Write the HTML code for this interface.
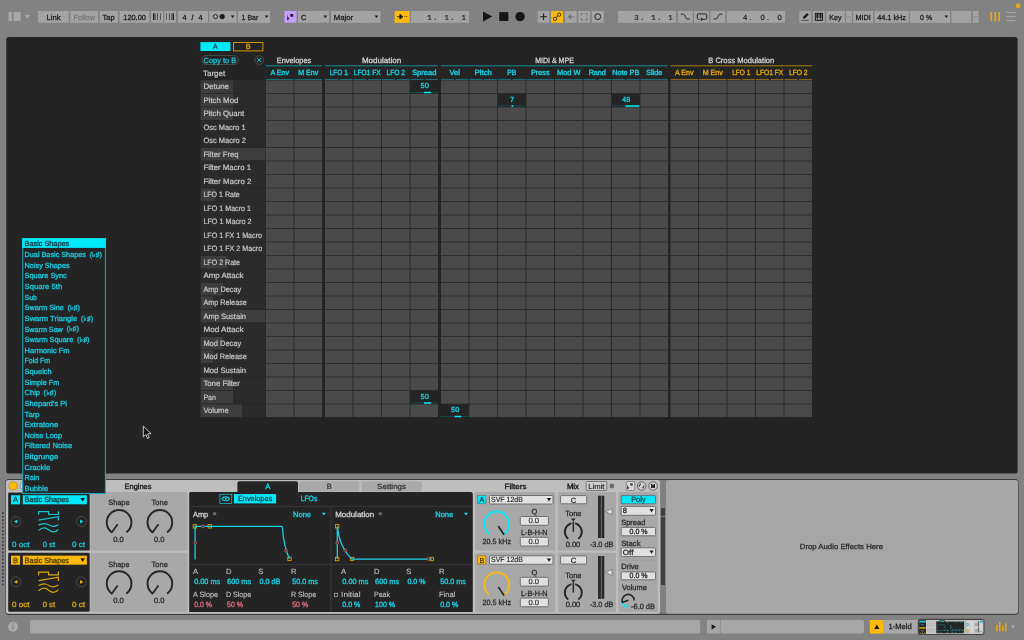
<!DOCTYPE html>
<html lang="en">
<head>
<meta charset="utf-8">
<title>Meld - Modulation Matrix</title>
<style>
html,body{margin:0;padding:0;background:#828282;overflow:hidden}
svg{display:block}
svg{will-change:transform}
text{font-family:"Liberation Sans", sans-serif;white-space:pre;text-rendering:geometricPrecision}
</style>
</head>
<body>
<svg width="1024" height="640" viewBox="0 0 1024 640">
<g id="control-bar">
<rect x="0" y="0" width="1024" height="640" fill="#828282"/>
<rect x="8.5" y="12" width="3.4" height="9" fill="#a8a8a8"/>
<rect x="13.5" y="12" width="7.1" height="9" fill="#a8a8a8"/>
<path d="M25 15.1 h4.8 l-2.4 3.6 z" fill="#a8a8a8"/>
<rect x="38.1" y="11" width="30.65" height="11.8" fill="#a3a3a3"/>
<text x="53.6" y="19.52" font-size="7.45" fill="#1c1c1c" text-anchor="middle" stroke="#1c1c1c" stroke-width="0.28" textLength="14.2" lengthAdjust="spacingAndGlyphs">Link</text>
<rect x="70.25" y="11" width="27.85" height="11.8" fill="#a3a3a3"/>
<text x="84.3" y="19.52" font-size="7.45" fill="#777" text-anchor="middle" stroke="#777" stroke-width="0.28" textLength="21.5" lengthAdjust="spacingAndGlyphs">Follow</text>
<rect x="99.6" y="11" width="18.3" height="11.8" fill="#a3a3a3"/>
<text x="108.6" y="19.52" font-size="7.45" fill="#1c1c1c" text-anchor="middle" stroke="#1c1c1c" stroke-width="0.28" textLength="12" lengthAdjust="spacingAndGlyphs">Tap</text>
<rect x="119.6" y="11" width="29.65" height="11.8" fill="#a3a3a3"/>
<text x="134.6" y="19.52" font-size="7.45" fill="#1c1c1c" text-anchor="middle" stroke="#1c1c1c" stroke-width="0.28" textLength="22.6" lengthAdjust="spacingAndGlyphs">120.00</text>
<rect x="151" y="11" width="12" height="11.8" fill="#a3a3a3"/>
<rect x="153" y="13.3" width="1" height="6.7" fill="#1c1c1c" opacity="0.95"/>
<rect x="154" y="13.3" width="1" height="6.7" fill="#1c1c1c" opacity="0.5"/>
<rect x="155" y="13.3" width="1" height="6.7" fill="#1c1c1c" opacity="0.38"/>
<rect x="157" y="13.3" width="1" height="6.7" fill="#1c1c1c" opacity="0.6"/>
<rect x="160" y="13.3" width="1" height="6.7" fill="#1c1c1c" opacity="0.55"/>
<rect x="164.25" y="11" width="11.85" height="11.8" fill="#a3a3a3"/>
<rect x="166" y="13.3" width="1" height="6.7" fill="#1c1c1c" opacity="0.5"/>
<rect x="169" y="13.3" width="1" height="6.7" fill="#1c1c1c" opacity="0.6"/>
<rect x="171" y="13.3" width="1" height="6.7" fill="#1c1c1c" opacity="0.42"/>
<rect x="172" y="13.3" width="1" height="6.7" fill="#1c1c1c" opacity="0.5"/>
<rect x="173" y="13.3" width="1" height="6.7" fill="#1c1c1c" opacity="0.95"/>
<rect x="178" y="11" width="30" height="11.8" fill="#a3a3a3"/>
<text x="182.6" y="19.52" font-size="7.45" fill="#1c1c1c" stroke="#1c1c1c" stroke-width="0.28" textLength="20" lengthAdjust="spacing">4 / 4</text>
<rect x="209.25" y="11" width="27.35" height="11.8" fill="#a3a3a3"/>
<circle cx="215.5" cy="16.6" r="2.1" fill="none" stroke="#1c1c1c" stroke-width="0.9"/>
<circle cx="222.2" cy="16.6" r="2.6" fill="#1c1c1c"/>
<path d="M230.7 15.4 h3.8 l-1.9 2.6 z" fill="#1c1c1c"/>
<rect x="238" y="11" width="32" height="11.8" fill="#a3a3a3"/>
<text x="241.6" y="19.52" font-size="7.45" fill="#1c1c1c" stroke="#1c1c1c" stroke-width="0.28" textLength="16.6" lengthAdjust="spacingAndGlyphs">1 Bar</text>
<path d="M264.6 15.4 h3.8 l-1.9 2.6 z" fill="#1c1c1c"/>
<rect x="284.4" y="11" width="12.1" height="11.8" fill="#c39ffb"/>
<text x="286.8" y="20.08" font-size="5.8" fill="#2a1a3a" stroke="#2a1a3a" stroke-width="0.45" style='font-family:"DejaVu Sans", sans-serif'>♭</text>
<rect x="290.3" y="13.9" width="3" height="2.9" fill="#2a1a3a" rx="0.6"/>
<rect x="298" y="11" width="31" height="11.8" fill="#a3a3a3"/>
<text x="301" y="19.52" font-size="7.45" fill="#1c1c1c" stroke="#1c1c1c" stroke-width="0.28">C</text>
<path d="M323.4 15.4 h3.8 l-1.9 2.6 z" fill="#1c1c1c"/>
<rect x="330.9" y="11" width="49.7" height="11.8" fill="#a3a3a3"/>
<text x="333.8" y="19.52" font-size="7.45" fill="#1c1c1c" stroke="#1c1c1c" stroke-width="0.28" textLength="19.4" lengthAdjust="spacingAndGlyphs">Major</text>
<path d="M374.6 15.4 h3.8 l-1.9 2.6 z" fill="#1c1c1c"/>
<rect x="394.6" y="11" width="15" height="11.8" fill="#fdb90c"/>
<path d="M397 16.7 h5.2 M399.9 14.4 l3 2.3 l-3 2.3 z" fill="#1c1c1c" stroke="#1c1c1c" stroke-width="0.9"/>
<rect x="404.4" y="16.3" width="1" height="0.8" fill="#1c1c1c"/>
<rect x="406.3" y="16.3" width="1" height="0.8" fill="#1c1c1c"/>
<rect x="410.9" y="11" width="58.2" height="11.8" fill="#a3a3a3"/>
<text x="427.3" y="19.57" font-size="7.6" fill="#1c1c1c" stroke="#1c1c1c" stroke-width="0.15" style='font-family:"Liberation Mono", monospace;letter-spacing:1.14px'>1. 1. 1</text>
<path d="M483 11.6 L492.3 16.6 L483 21.6 z" fill="#161616"/>
<rect x="499.2" y="12.1" width="9.1" height="8.9" fill="#161616"/>
<circle cx="520.1" cy="16.6" r="4.7" fill="#161616"/>
<rect x="537.6" y="11" width="11.9" height="11.8" fill="#a3a3a3"/>
<path d="M540.3 16.7 h6.6 M543.6 13.4 v6.6" fill="none" stroke="#1c1c1c" stroke-width="1"/>
<rect x="551.1" y="11" width="11.9" height="11.8" fill="#fdb90c"/>
<path d="M556.2 17.6 L558 15.8" fill="none" stroke="#1c1c1c" stroke-width="0.9"/>
<circle cx="555" cy="18.8" r="1.7" fill="none" stroke="#1c1c1c" stroke-width="0.8"/>
<circle cx="559.2" cy="14.6" r="1.7" fill="none" stroke="#1c1c1c" stroke-width="0.8"/>
<rect x="564.75" y="11" width="12" height="11.8" fill="#a3a3a3"/>
<path d="M574 16.7 h-5 M570.9 14.7 l-2.9 2 l2.9 2 z" fill="#747474" stroke="#747474" stroke-width="0.8"/>
<rect x="578.25" y="11" width="11.85" height="11.8" fill="#a3a3a3"/>
<path d="M581.3 15.4 v-1.9 h1.9 M585.2 13.5 h1.9 v1.9 M587.1 18 v1.9 h-1.9 M583.2 19.9 h-1.9 v-1.9" fill="none" stroke="#747474" stroke-width="0.9"/>
<rect x="591.75" y="11" width="12.15" height="11.8" fill="#a3a3a3"/>
<circle cx="597.8" cy="16.7" r="2.9" fill="none" stroke="#1c1c1c" stroke-width="0.9"/>
<rect x="618" y="11" width="58.1" height="11.8" fill="#a3a3a3"/>
<text x="634.2" y="19.57" font-size="7.6" fill="#1c1c1c" stroke="#1c1c1c" stroke-width="0.15" style='font-family:"Liberation Mono", monospace;letter-spacing:1.14px'>3. 1. 1</text>
<rect x="677.75" y="11" width="15" height="11.8" fill="#a3a3a3"/>
<path d="M680.8 14.2 h2.6 c2.2 0 1.6 4.8 4 4.8 h2.4" fill="none" stroke="#1c1c1c" stroke-width="0.9"/>
<rect x="694" y="11" width="15" height="11.8" fill="#a3a3a3"/>
<path d="M702.8 19.3 h3 a0.9 0.9 0 0 0 0.9 -0.9 v-3.6 a0.9 0.9 0 0 0 -0.9 -0.9 h-7.6 a0.9 0.9 0 0 0 -0.9 0.9 v3.6 a0.9 0.9 0 0 0 0.9 0.9 h1.6" fill="none" stroke="#1c1c1c" stroke-width="0.9"/>
<path d="M703.2 19.3 l-2.3 -1.7 v3.4 z" fill="#1c1c1c"/>
<rect x="710.5" y="11" width="14.75" height="11.8" fill="#a3a3a3"/>
<path d="M713.4 19 h2.6 c2.2 0 1.6 -4.8 4 -4.8 h2.4" fill="none" stroke="#1c1c1c" stroke-width="0.9"/>
<rect x="726.9" y="11" width="58.1" height="11.8" fill="#a3a3a3"/>
<text x="742.9" y="19.57" font-size="7.6" fill="#1c1c1c" stroke="#1c1c1c" stroke-width="0.2" dx="0 2.37 0.4 6.3 2.27 1 5.2">4. 0. 0</text>
<rect x="799.25" y="11" width="11.85" height="11.8" fill="#a3a3a3"/>
<line x1="803.5" y1="18.1" x2="808" y2="13.9" stroke="#1c1c1c" stroke-width="2.4"/>
<rect x="801.4" y="19.9" width="7.4" height="0.8" fill="#3a3a3a"/>
<rect x="812.75" y="11" width="12.05" height="11.8" fill="#a3a3a3"/>
<rect x="815.4" y="13.4" width="7.1" height="7" fill="none" stroke="#1c1c1c" stroke-width="1"/>
<rect x="816.4" y="13.4" width="2" height="4.8" fill="#1c1c1c"/>
<rect x="819.5" y="13.4" width="2" height="4.8" fill="#1c1c1c"/>
<line x1="817.35" y1="18.2" x2="817.35" y2="20.4" stroke="#1c1c1c" stroke-width="0.6"/>
<line x1="820.55" y1="18.2" x2="820.55" y2="20.4" stroke="#1c1c1c" stroke-width="0.6"/>
<rect x="826.25" y="11" width="18.5" height="11.8" fill="#a3a3a3"/>
<text x="835.4" y="19.52" font-size="7.45" fill="#1c1c1c" text-anchor="middle" stroke="#1c1c1c" stroke-width="0.28" textLength="12.3" lengthAdjust="spacingAndGlyphs">Key</text>
<rect x="846" y="11" width="5.9" height="11.8" fill="#a3a3a3"/>
<line x1="846" y1="16.9" x2="851.9" y2="16.9" stroke="#828282" stroke-width="0.6"/>
<rect x="853.1" y="11" width="20" height="11.8" fill="#a3a3a3"/>
<text x="863.2" y="19.52" font-size="7.45" fill="#1c1c1c" text-anchor="middle" stroke="#1c1c1c" stroke-width="0.28" textLength="15.4" lengthAdjust="spacingAndGlyphs">MIDI</text>
<rect x="874.6" y="11" width="34.15" height="11.8" fill="#a3a3a3"/>
<text x="891.6" y="19.52" font-size="7.45" fill="#1c1c1c" text-anchor="middle" stroke="#1c1c1c" stroke-width="0.28" textLength="28.8" lengthAdjust="spacingAndGlyphs">44.1 kHz</text>
<rect x="910.1" y="11" width="39.9" height="11.8" fill="#a3a3a3"/>
<text x="926.1" y="19.52" font-size="7.45" fill="#1c1c1c" text-anchor="middle" stroke="#1c1c1c" stroke-width="0.28" textLength="12" lengthAdjust="spacingAndGlyphs">0 %</text>
<path d="M944.4 15.4 h3.8 l-1.9 2.6 z" fill="#1c1c1c"/>
<rect x="951.4" y="11" width="19.85" height="11.8" fill="#a3a3a3"/>
<rect x="972.9" y="11" width="5.6" height="11.8" fill="#a3a3a3"/>
<line x1="972.9" y1="16.9" x2="978.5" y2="16.9" stroke="#828282" stroke-width="0.6"/>
<rect x="990.4" y="12.1" width="1.7" height="9.2" fill="#e6a913"/>
<rect x="994.4" y="12.1" width="1.7" height="9.2" fill="#e6a913"/>
<rect x="998.3" y="12.1" width="1.7" height="9.2" fill="#e6a913"/>
<rect x="1006.3" y="11.9" width="9.3" height="1.2" fill="#a6a6a6"/>
<rect x="1006.3" y="15.9" width="9.3" height="1.2" fill="#a6a6a6"/>
<rect x="1006.3" y="19.9" width="9.3" height="1.2" fill="#a6a6a6"/>
<circle cx="1018.1" cy="5.8" r="2.4" fill="#e6a913"/>
</g>
<g id="matrix-view">
<rect x="6.3" y="37.1" width="1011.3" height="436.4" fill="#242424" rx="2.2"/>
<rect x="200.4" y="42.1" width="30" height="8.9" fill="#03e9fc"/>
<text x="215.3" y="49.35" font-size="7.4" fill="#1c3f45" text-anchor="middle" stroke="#1c3f45" stroke-width="0.28">A</text>
<rect x="233.5" y="42.5" width="29.4" height="8.4" fill="none" stroke="#e0a20e" stroke-width="0.9"/>
<text x="248.2" y="49.35" font-size="7.4" fill="#e0a20e" text-anchor="middle" stroke="#e0a20e" stroke-width="0.28">B</text>
<rect x="201.7" y="55.5" width="36.6" height="9" fill="none" rx="4.5" stroke="#5c5c5c" stroke-width="0.7"/>
<text x="203.6" y="62.82" font-size="7.6" fill="#18bfd1" stroke="#18bfd1" stroke-width="0.36" textLength="32.6" lengthAdjust="spacingAndGlyphs">Copy to B</text>
<circle cx="259.2" cy="60" r="4.3" fill="none" stroke="#5c5c5c" stroke-width="0.7"/>
<path d="M257.2 58 l4 4 M261.2 58 l-4 4" fill="none" stroke="#19cfe3" stroke-width="1"/>
<text x="203.1" y="76.17" font-size="7.75" fill="#c5c5c5" stroke="#c5c5c5" stroke-width="0.23" textLength="22" lengthAdjust="spacingAndGlyphs">Target</text>
<text x="279.75" y="75.44" font-size="7.5" fill="#19cfe3" text-anchor="middle" stroke="#19cfe3" stroke-width="0.38" textLength="18.6" lengthAdjust="spacingAndGlyphs">A Env</text>
<rect x="266" y="78.9" width="27.5" height="1.1" fill="#1a6c76"/>
<text x="308.25" y="75.44" font-size="7.5" fill="#19cfe3" text-anchor="middle" stroke="#19cfe3" stroke-width="0.38" textLength="20.2" lengthAdjust="spacingAndGlyphs">M Env</text>
<rect x="294.5" y="78.9" width="27.5" height="1.1" fill="#1a6c76"/>
<rect x="266" y="65.3" width="56" height="1" fill="#148c98"/>
<text x="294" y="62.87" font-size="7.75" fill="#d4d4d4" text-anchor="middle" stroke="#d4d4d4" stroke-width="0.28" textLength="34.4" lengthAdjust="spacingAndGlyphs">Envelopes</text>
<text x="338.75" y="75.44" font-size="7.5" fill="#19cfe3" text-anchor="middle" stroke="#19cfe3" stroke-width="0.38" textLength="18.2" lengthAdjust="spacingAndGlyphs">LFO 1</text>
<rect x="325" y="78.9" width="12.9" height="1.1" fill="#1a6c76"/>
<rect x="339.6" y="78.9" width="12.9" height="1.1" fill="#1a6c76"/>
<text x="367.25" y="75.44" font-size="7.5" fill="#19cfe3" text-anchor="middle" stroke="#19cfe3" stroke-width="0.38" textLength="27" lengthAdjust="spacingAndGlyphs">LFO1 FX</text>
<rect x="353.5" y="78.9" width="12.9" height="1.1" fill="#1a6c76"/>
<rect x="368.1" y="78.9" width="12.9" height="1.1" fill="#1a6c76"/>
<text x="395.75" y="75.44" font-size="7.5" fill="#19cfe3" text-anchor="middle" stroke="#19cfe3" stroke-width="0.38" textLength="18.6" lengthAdjust="spacingAndGlyphs">LFO 2</text>
<rect x="382" y="78.9" width="12.9" height="1.1" fill="#1a6c76"/>
<rect x="396.6" y="78.9" width="12.9" height="1.1" fill="#1a6c76"/>
<text x="424.25" y="75.44" font-size="7.5" fill="#19cfe3" text-anchor="middle" stroke="#19cfe3" stroke-width="0.38" textLength="24.6" lengthAdjust="spacingAndGlyphs">Spread</text>
<rect x="410.5" y="78.9" width="12.9" height="1.1" fill="#1a6c76"/>
<rect x="425.1" y="78.9" width="12.9" height="1.1" fill="#1a6c76"/>
<rect x="325" y="65.3" width="113" height="1" fill="#148c98"/>
<text x="381.5" y="62.87" font-size="7.75" fill="#d4d4d4" text-anchor="middle" stroke="#d4d4d4" stroke-width="0.28" textLength="39.2" lengthAdjust="spacingAndGlyphs">Modulation</text>
<text x="454.75" y="75.44" font-size="7.5" fill="#19cfe3" text-anchor="middle" stroke="#19cfe3" stroke-width="0.38" textLength="10.4" lengthAdjust="spacingAndGlyphs">Vel</text>
<rect x="441" y="78.9" width="12.9" height="1.1" fill="#1a6c76"/>
<rect x="455.6" y="78.9" width="12.9" height="1.1" fill="#1a6c76"/>
<text x="483.25" y="75.44" font-size="7.5" fill="#19cfe3" text-anchor="middle" stroke="#19cfe3" stroke-width="0.38" textLength="17.6" lengthAdjust="spacingAndGlyphs">Pitch</text>
<rect x="469.5" y="78.9" width="12.9" height="1.1" fill="#1a6c76"/>
<rect x="484.1" y="78.9" width="12.9" height="1.1" fill="#1a6c76"/>
<text x="511.75" y="75.44" font-size="7.5" fill="#19cfe3" text-anchor="middle" stroke="#19cfe3" stroke-width="0.38" textLength="9" lengthAdjust="spacingAndGlyphs">PB</text>
<rect x="498" y="78.9" width="12.9" height="1.1" fill="#1a6c76"/>
<rect x="512.6" y="78.9" width="12.9" height="1.1" fill="#1a6c76"/>
<text x="540.25" y="75.44" font-size="7.5" fill="#19cfe3" text-anchor="middle" stroke="#19cfe3" stroke-width="0.38" textLength="18.6" lengthAdjust="spacingAndGlyphs">Press</text>
<rect x="526.5" y="78.9" width="27.5" height="1.1" fill="#1a6c76"/>
<text x="568.75" y="75.44" font-size="7.5" fill="#19cfe3" text-anchor="middle" stroke="#19cfe3" stroke-width="0.38" textLength="23.6" lengthAdjust="spacingAndGlyphs">Mod W</text>
<rect x="555" y="78.9" width="27.5" height="1.1" fill="#1a6c76"/>
<text x="597.25" y="75.44" font-size="7.5" fill="#19cfe3" text-anchor="middle" stroke="#19cfe3" stroke-width="0.38" textLength="17.2" lengthAdjust="spacingAndGlyphs">Rand</text>
<rect x="583.5" y="78.9" width="12.9" height="1.1" fill="#1a6c76"/>
<rect x="598.1" y="78.9" width="12.9" height="1.1" fill="#1a6c76"/>
<text x="625.75" y="75.44" font-size="7.5" fill="#19cfe3" text-anchor="middle" stroke="#19cfe3" stroke-width="0.38" textLength="27" lengthAdjust="spacingAndGlyphs">Note PB</text>
<rect x="612" y="78.9" width="12.9" height="1.1" fill="#1a6c76"/>
<rect x="626.6" y="78.9" width="12.9" height="1.1" fill="#1a6c76"/>
<text x="654.25" y="75.44" font-size="7.5" fill="#19cfe3" text-anchor="middle" stroke="#19cfe3" stroke-width="0.38" textLength="16.4" lengthAdjust="spacingAndGlyphs">Slide</text>
<rect x="640.5" y="78.9" width="27.5" height="1.1" fill="#1a6c76"/>
<rect x="441" y="65.3" width="227" height="1" fill="#148c98"/>
<text x="554.5" y="62.87" font-size="7.75" fill="#d4d4d4" text-anchor="middle" stroke="#d4d4d4" stroke-width="0.28" textLength="38.7" lengthAdjust="spacingAndGlyphs">MIDI &amp; MPE</text>
<text x="684.25" y="75.44" font-size="7.5" fill="#e2a60c" text-anchor="middle" stroke="#e2a60c" stroke-width="0.38" textLength="18.6" lengthAdjust="spacingAndGlyphs">A Env</text>
<rect x="670.5" y="78.9" width="27.5" height="1.1" fill="#85651a"/>
<text x="712.75" y="75.44" font-size="7.5" fill="#e2a60c" text-anchor="middle" stroke="#e2a60c" stroke-width="0.38" textLength="20.2" lengthAdjust="spacingAndGlyphs">M Env</text>
<rect x="699" y="78.9" width="27.5" height="1.1" fill="#85651a"/>
<text x="741.25" y="75.44" font-size="7.5" fill="#e2a60c" text-anchor="middle" stroke="#e2a60c" stroke-width="0.38" textLength="18.2" lengthAdjust="spacingAndGlyphs">LFO 1</text>
<rect x="727.5" y="78.9" width="12.9" height="1.1" fill="#85651a"/>
<rect x="742.1" y="78.9" width="12.9" height="1.1" fill="#85651a"/>
<text x="769.75" y="75.44" font-size="7.5" fill="#e2a60c" text-anchor="middle" stroke="#e2a60c" stroke-width="0.38" textLength="27" lengthAdjust="spacingAndGlyphs">LFO1 FX</text>
<rect x="756" y="78.9" width="12.9" height="1.1" fill="#85651a"/>
<rect x="770.6" y="78.9" width="12.9" height="1.1" fill="#85651a"/>
<text x="798.25" y="75.44" font-size="7.5" fill="#e2a60c" text-anchor="middle" stroke="#e2a60c" stroke-width="0.38" textLength="18.6" lengthAdjust="spacingAndGlyphs">LFO 2</text>
<rect x="784.5" y="78.9" width="12.9" height="1.1" fill="#85651a"/>
<rect x="799.1" y="78.9" width="12.9" height="1.1" fill="#85651a"/>
<rect x="670.5" y="65.3" width="141.5" height="1" fill="#a87e0e"/>
<text x="741.25" y="62.87" font-size="7.75" fill="#d4d4d4" text-anchor="middle" stroke="#d4d4d4" stroke-width="0.28" textLength="66" lengthAdjust="spacingAndGlyphs">B Cross Modulation</text>
<rect x="200.7" y="79.9" width="64.8" height="337.5" fill="#2b2b2b"/>
<rect x="266" y="80.4" width="56" height="336.7" fill="#2b2b2b"/>
<rect x="325" y="80.4" width="113" height="336.7" fill="#2b2b2b"/>
<rect x="441" y="80.4" width="227" height="336.7" fill="#2b2b2b"/>
<rect x="670.5" y="80.4" width="141.5" height="336.7" fill="#2b2b2b"/>
<rect x="200.7" y="80.4" width="32.3" height="12.7" fill="#3d3d3d"/>
<text x="203.4" y="89.37" font-size="7.75" fill="#c5c5c5" stroke="#c5c5c5" stroke-width="0.23" textLength="25.6" lengthAdjust="spacingAndGlyphs">Detune</text>
<rect x="266" y="80.4" width="27.5" height="12.7" fill="#4a4a4a"/>
<rect x="294.5" y="80.4" width="27.5" height="12.7" fill="#4a4a4a"/>
<rect x="325" y="80.4" width="27.5" height="12.7" fill="#4a4a4a"/>
<rect x="353.5" y="80.4" width="27.5" height="12.7" fill="#4a4a4a"/>
<rect x="382" y="80.4" width="27.5" height="12.7" fill="#4a4a4a"/>
<rect x="410.5" y="80.4" width="27.5" height="13.2" fill="#242424"/>
<rect x="410.5" y="92" width="27.5" height="0.7" fill="#0f5761"/>
<rect x="423.95" y="91.7" width="7" height="1.5" fill="#03e9fc" rx="0.5"/>
<text x="424.65" y="88.45" font-size="7.4" fill="#19cfe3" text-anchor="middle" stroke="#19cfe3" stroke-width="0.32">50</text>
<rect x="441" y="80.4" width="27.5" height="12.7" fill="#4a4a4a"/>
<rect x="469.5" y="80.4" width="27.5" height="12.7" fill="#4a4a4a"/>
<rect x="498" y="80.4" width="27.5" height="12.7" fill="#4a4a4a"/>
<rect x="526.5" y="80.4" width="27.5" height="12.7" fill="#4a4a4a"/>
<rect x="555" y="80.4" width="27.5" height="12.7" fill="#4a4a4a"/>
<rect x="583.5" y="80.4" width="27.5" height="12.7" fill="#4a4a4a"/>
<rect x="612" y="80.4" width="27.5" height="12.7" fill="#4a4a4a"/>
<rect x="640.5" y="80.4" width="27.5" height="12.7" fill="#4a4a4a"/>
<rect x="670.5" y="80.4" width="27.5" height="12.7" fill="#4a4a4a"/>
<rect x="699" y="80.4" width="27.5" height="12.7" fill="#4a4a4a"/>
<rect x="727.5" y="80.4" width="27.5" height="12.7" fill="#4a4a4a"/>
<rect x="756" y="80.4" width="27.5" height="12.7" fill="#4a4a4a"/>
<rect x="784.5" y="80.4" width="27.5" height="12.7" fill="#4a4a4a"/>
<rect x="200.7" y="93.15" width="64.8" height="0.5" fill="#262626"/>
<rect x="200.7" y="93.9" width="32.3" height="12.7" fill="#3d3d3d"/>
<text x="203.4" y="102.87" font-size="7.75" fill="#c5c5c5" stroke="#c5c5c5" stroke-width="0.23" textLength="35" lengthAdjust="spacingAndGlyphs">Pitch Mod</text>
<rect x="266" y="93.9" width="27.5" height="12.7" fill="#4a4a4a"/>
<rect x="294.5" y="93.9" width="27.5" height="12.7" fill="#4a4a4a"/>
<rect x="325" y="93.9" width="27.5" height="12.7" fill="#4a4a4a"/>
<rect x="353.5" y="93.9" width="27.5" height="12.7" fill="#4a4a4a"/>
<rect x="382" y="93.9" width="27.5" height="12.7" fill="#4a4a4a"/>
<rect x="410.5" y="93.9" width="27.5" height="12.7" fill="#4a4a4a"/>
<rect x="441" y="93.9" width="27.5" height="12.7" fill="#4a4a4a"/>
<rect x="469.5" y="93.9" width="27.5" height="12.7" fill="#4a4a4a"/>
<rect x="498" y="93.9" width="27.5" height="13.2" fill="#242424"/>
<rect x="498" y="105.5" width="27.5" height="0.7" fill="#0f5761"/>
<rect x="511.45" y="105.2" width="2" height="1.5" fill="#03e9fc" rx="0.5"/>
<text x="512.15" y="101.95" font-size="7.4" fill="#19cfe3" text-anchor="middle" stroke="#19cfe3" stroke-width="0.32">7</text>
<rect x="526.5" y="93.9" width="27.5" height="12.7" fill="#4a4a4a"/>
<rect x="555" y="93.9" width="27.5" height="12.7" fill="#4a4a4a"/>
<rect x="583.5" y="93.9" width="27.5" height="12.7" fill="#4a4a4a"/>
<rect x="612" y="93.9" width="27.5" height="13.2" fill="#242424"/>
<rect x="612" y="105.5" width="27.5" height="0.7" fill="#0f5761"/>
<rect x="625.45" y="105.2" width="14" height="1.5" fill="#03e9fc" rx="0.5"/>
<text x="626.15" y="101.95" font-size="7.4" fill="#19cfe3" text-anchor="middle" stroke="#19cfe3" stroke-width="0.32">48</text>
<rect x="640.5" y="93.9" width="27.5" height="12.7" fill="#4a4a4a"/>
<rect x="670.5" y="93.9" width="27.5" height="12.7" fill="#4a4a4a"/>
<rect x="699" y="93.9" width="27.5" height="12.7" fill="#4a4a4a"/>
<rect x="727.5" y="93.9" width="27.5" height="12.7" fill="#4a4a4a"/>
<rect x="756" y="93.9" width="27.5" height="12.7" fill="#4a4a4a"/>
<rect x="784.5" y="93.9" width="27.5" height="12.7" fill="#4a4a4a"/>
<rect x="200.7" y="106.65" width="64.8" height="0.5" fill="#262626"/>
<rect x="200.7" y="107.4" width="32.3" height="12.7" fill="#3d3d3d"/>
<text x="203.4" y="116.37" font-size="7.75" fill="#c5c5c5" stroke="#c5c5c5" stroke-width="0.23" textLength="40.8" lengthAdjust="spacingAndGlyphs">Pitch Quant</text>
<rect x="266" y="107.4" width="27.5" height="12.7" fill="#4a4a4a"/>
<rect x="294.5" y="107.4" width="27.5" height="12.7" fill="#4a4a4a"/>
<rect x="325" y="107.4" width="27.5" height="12.7" fill="#4a4a4a"/>
<rect x="353.5" y="107.4" width="27.5" height="12.7" fill="#4a4a4a"/>
<rect x="382" y="107.4" width="27.5" height="12.7" fill="#4a4a4a"/>
<rect x="410.5" y="107.4" width="27.5" height="12.7" fill="#4a4a4a"/>
<rect x="441" y="107.4" width="27.5" height="12.7" fill="#4a4a4a"/>
<rect x="469.5" y="107.4" width="27.5" height="12.7" fill="#4a4a4a"/>
<rect x="498" y="107.4" width="27.5" height="12.7" fill="#4a4a4a"/>
<rect x="526.5" y="107.4" width="27.5" height="12.7" fill="#4a4a4a"/>
<rect x="555" y="107.4" width="27.5" height="12.7" fill="#4a4a4a"/>
<rect x="583.5" y="107.4" width="27.5" height="12.7" fill="#4a4a4a"/>
<rect x="612" y="107.4" width="27.5" height="12.7" fill="#4a4a4a"/>
<rect x="640.5" y="107.4" width="27.5" height="12.7" fill="#4a4a4a"/>
<rect x="670.5" y="107.4" width="27.5" height="12.7" fill="#4a4a4a"/>
<rect x="699" y="107.4" width="27.5" height="12.7" fill="#4a4a4a"/>
<rect x="727.5" y="107.4" width="27.5" height="12.7" fill="#4a4a4a"/>
<rect x="756" y="107.4" width="27.5" height="12.7" fill="#4a4a4a"/>
<rect x="784.5" y="107.4" width="27.5" height="12.7" fill="#4a4a4a"/>
<rect x="200.7" y="120.15" width="64.8" height="0.5" fill="#262626"/>
<text x="203.4" y="129.87" font-size="7.75" fill="#c5c5c5" stroke="#c5c5c5" stroke-width="0.23" textLength="42.2" lengthAdjust="spacingAndGlyphs">Osc Macro 1</text>
<rect x="266" y="120.9" width="27.5" height="12.7" fill="#4a4a4a"/>
<rect x="294.5" y="120.9" width="27.5" height="12.7" fill="#4a4a4a"/>
<rect x="325" y="120.9" width="27.5" height="12.7" fill="#4a4a4a"/>
<rect x="353.5" y="120.9" width="27.5" height="12.7" fill="#4a4a4a"/>
<rect x="382" y="120.9" width="27.5" height="12.7" fill="#4a4a4a"/>
<rect x="410.5" y="120.9" width="27.5" height="12.7" fill="#4a4a4a"/>
<rect x="441" y="120.9" width="27.5" height="12.7" fill="#4a4a4a"/>
<rect x="469.5" y="120.9" width="27.5" height="12.7" fill="#4a4a4a"/>
<rect x="498" y="120.9" width="27.5" height="12.7" fill="#4a4a4a"/>
<rect x="526.5" y="120.9" width="27.5" height="12.7" fill="#4a4a4a"/>
<rect x="555" y="120.9" width="27.5" height="12.7" fill="#4a4a4a"/>
<rect x="583.5" y="120.9" width="27.5" height="12.7" fill="#4a4a4a"/>
<rect x="612" y="120.9" width="27.5" height="12.7" fill="#4a4a4a"/>
<rect x="640.5" y="120.9" width="27.5" height="12.7" fill="#4a4a4a"/>
<rect x="670.5" y="120.9" width="27.5" height="12.7" fill="#4a4a4a"/>
<rect x="699" y="120.9" width="27.5" height="12.7" fill="#4a4a4a"/>
<rect x="727.5" y="120.9" width="27.5" height="12.7" fill="#4a4a4a"/>
<rect x="756" y="120.9" width="27.5" height="12.7" fill="#4a4a4a"/>
<rect x="784.5" y="120.9" width="27.5" height="12.7" fill="#4a4a4a"/>
<rect x="200.7" y="133.65" width="64.8" height="0.5" fill="#262626"/>
<text x="203.4" y="143.37" font-size="7.75" fill="#c5c5c5" stroke="#c5c5c5" stroke-width="0.23" textLength="42.6" lengthAdjust="spacingAndGlyphs">Osc Macro 2</text>
<rect x="266" y="134.4" width="27.5" height="12.7" fill="#4a4a4a"/>
<rect x="294.5" y="134.4" width="27.5" height="12.7" fill="#4a4a4a"/>
<rect x="325" y="134.4" width="27.5" height="12.7" fill="#4a4a4a"/>
<rect x="353.5" y="134.4" width="27.5" height="12.7" fill="#4a4a4a"/>
<rect x="382" y="134.4" width="27.5" height="12.7" fill="#4a4a4a"/>
<rect x="410.5" y="134.4" width="27.5" height="12.7" fill="#4a4a4a"/>
<rect x="441" y="134.4" width="27.5" height="12.7" fill="#4a4a4a"/>
<rect x="469.5" y="134.4" width="27.5" height="12.7" fill="#4a4a4a"/>
<rect x="498" y="134.4" width="27.5" height="12.7" fill="#4a4a4a"/>
<rect x="526.5" y="134.4" width="27.5" height="12.7" fill="#4a4a4a"/>
<rect x="555" y="134.4" width="27.5" height="12.7" fill="#4a4a4a"/>
<rect x="583.5" y="134.4" width="27.5" height="12.7" fill="#4a4a4a"/>
<rect x="612" y="134.4" width="27.5" height="12.7" fill="#4a4a4a"/>
<rect x="640.5" y="134.4" width="27.5" height="12.7" fill="#4a4a4a"/>
<rect x="670.5" y="134.4" width="27.5" height="12.7" fill="#4a4a4a"/>
<rect x="699" y="134.4" width="27.5" height="12.7" fill="#4a4a4a"/>
<rect x="727.5" y="134.4" width="27.5" height="12.7" fill="#4a4a4a"/>
<rect x="756" y="134.4" width="27.5" height="12.7" fill="#4a4a4a"/>
<rect x="784.5" y="134.4" width="27.5" height="12.7" fill="#4a4a4a"/>
<rect x="200.7" y="147.15" width="64.8" height="0.5" fill="#262626"/>
<rect x="200.7" y="147.9" width="64.8" height="12.7" fill="#3d3d3d"/>
<text x="203.4" y="156.87" font-size="7.75" fill="#c5c5c5" stroke="#c5c5c5" stroke-width="0.23" textLength="35.2" lengthAdjust="spacingAndGlyphs">Filter Freq</text>
<rect x="266" y="147.9" width="27.5" height="12.7" fill="#4a4a4a"/>
<rect x="294.5" y="147.9" width="27.5" height="12.7" fill="#4a4a4a"/>
<rect x="325" y="147.9" width="27.5" height="12.7" fill="#4a4a4a"/>
<rect x="353.5" y="147.9" width="27.5" height="12.7" fill="#4a4a4a"/>
<rect x="382" y="147.9" width="27.5" height="12.7" fill="#4a4a4a"/>
<rect x="410.5" y="147.9" width="27.5" height="12.7" fill="#4a4a4a"/>
<rect x="441" y="147.9" width="27.5" height="12.7" fill="#4a4a4a"/>
<rect x="469.5" y="147.9" width="27.5" height="12.7" fill="#4a4a4a"/>
<rect x="498" y="147.9" width="27.5" height="12.7" fill="#4a4a4a"/>
<rect x="526.5" y="147.9" width="27.5" height="12.7" fill="#4a4a4a"/>
<rect x="555" y="147.9" width="27.5" height="12.7" fill="#4a4a4a"/>
<rect x="583.5" y="147.9" width="27.5" height="12.7" fill="#4a4a4a"/>
<rect x="612" y="147.9" width="27.5" height="12.7" fill="#4a4a4a"/>
<rect x="640.5" y="147.9" width="27.5" height="12.7" fill="#4a4a4a"/>
<rect x="670.5" y="147.9" width="27.5" height="12.7" fill="#4a4a4a"/>
<rect x="699" y="147.9" width="27.5" height="12.7" fill="#4a4a4a"/>
<rect x="727.5" y="147.9" width="27.5" height="12.7" fill="#4a4a4a"/>
<rect x="756" y="147.9" width="27.5" height="12.7" fill="#4a4a4a"/>
<rect x="784.5" y="147.9" width="27.5" height="12.7" fill="#4a4a4a"/>
<rect x="200.7" y="160.65" width="64.8" height="0.5" fill="#262626"/>
<text x="203.4" y="170.37" font-size="7.75" fill="#c5c5c5" stroke="#c5c5c5" stroke-width="0.23" textLength="47.6" lengthAdjust="spacingAndGlyphs">Filter Macro 1</text>
<rect x="266" y="161.4" width="27.5" height="12.7" fill="#4a4a4a"/>
<rect x="294.5" y="161.4" width="27.5" height="12.7" fill="#4a4a4a"/>
<rect x="325" y="161.4" width="27.5" height="12.7" fill="#4a4a4a"/>
<rect x="353.5" y="161.4" width="27.5" height="12.7" fill="#4a4a4a"/>
<rect x="382" y="161.4" width="27.5" height="12.7" fill="#4a4a4a"/>
<rect x="410.5" y="161.4" width="27.5" height="12.7" fill="#4a4a4a"/>
<rect x="441" y="161.4" width="27.5" height="12.7" fill="#4a4a4a"/>
<rect x="469.5" y="161.4" width="27.5" height="12.7" fill="#4a4a4a"/>
<rect x="498" y="161.4" width="27.5" height="12.7" fill="#4a4a4a"/>
<rect x="526.5" y="161.4" width="27.5" height="12.7" fill="#4a4a4a"/>
<rect x="555" y="161.4" width="27.5" height="12.7" fill="#4a4a4a"/>
<rect x="583.5" y="161.4" width="27.5" height="12.7" fill="#4a4a4a"/>
<rect x="612" y="161.4" width="27.5" height="12.7" fill="#4a4a4a"/>
<rect x="640.5" y="161.4" width="27.5" height="12.7" fill="#4a4a4a"/>
<rect x="670.5" y="161.4" width="27.5" height="12.7" fill="#4a4a4a"/>
<rect x="699" y="161.4" width="27.5" height="12.7" fill="#4a4a4a"/>
<rect x="727.5" y="161.4" width="27.5" height="12.7" fill="#4a4a4a"/>
<rect x="756" y="161.4" width="27.5" height="12.7" fill="#4a4a4a"/>
<rect x="784.5" y="161.4" width="27.5" height="12.7" fill="#4a4a4a"/>
<rect x="200.7" y="174.15" width="64.8" height="0.5" fill="#262626"/>
<text x="203.4" y="183.87" font-size="7.75" fill="#c5c5c5" stroke="#c5c5c5" stroke-width="0.23" textLength="48" lengthAdjust="spacingAndGlyphs">Filter Macro 2</text>
<rect x="266" y="174.9" width="27.5" height="12.7" fill="#4a4a4a"/>
<rect x="294.5" y="174.9" width="27.5" height="12.7" fill="#4a4a4a"/>
<rect x="325" y="174.9" width="27.5" height="12.7" fill="#4a4a4a"/>
<rect x="353.5" y="174.9" width="27.5" height="12.7" fill="#4a4a4a"/>
<rect x="382" y="174.9" width="27.5" height="12.7" fill="#4a4a4a"/>
<rect x="410.5" y="174.9" width="27.5" height="12.7" fill="#4a4a4a"/>
<rect x="441" y="174.9" width="27.5" height="12.7" fill="#4a4a4a"/>
<rect x="469.5" y="174.9" width="27.5" height="12.7" fill="#4a4a4a"/>
<rect x="498" y="174.9" width="27.5" height="12.7" fill="#4a4a4a"/>
<rect x="526.5" y="174.9" width="27.5" height="12.7" fill="#4a4a4a"/>
<rect x="555" y="174.9" width="27.5" height="12.7" fill="#4a4a4a"/>
<rect x="583.5" y="174.9" width="27.5" height="12.7" fill="#4a4a4a"/>
<rect x="612" y="174.9" width="27.5" height="12.7" fill="#4a4a4a"/>
<rect x="640.5" y="174.9" width="27.5" height="12.7" fill="#4a4a4a"/>
<rect x="670.5" y="174.9" width="27.5" height="12.7" fill="#4a4a4a"/>
<rect x="699" y="174.9" width="27.5" height="12.7" fill="#4a4a4a"/>
<rect x="727.5" y="174.9" width="27.5" height="12.7" fill="#4a4a4a"/>
<rect x="756" y="174.9" width="27.5" height="12.7" fill="#4a4a4a"/>
<rect x="784.5" y="174.9" width="27.5" height="12.7" fill="#4a4a4a"/>
<rect x="200.7" y="187.65" width="64.8" height="0.5" fill="#262626"/>
<rect x="200.7" y="188.4" width="14.7" height="12.7" fill="#3d3d3d"/>
<text x="203.4" y="197.37" font-size="7.75" fill="#c5c5c5" stroke="#c5c5c5" stroke-width="0.23" textLength="36.4" lengthAdjust="spacingAndGlyphs">LFO 1 Rate</text>
<rect x="266" y="188.4" width="27.5" height="12.7" fill="#4a4a4a"/>
<rect x="294.5" y="188.4" width="27.5" height="12.7" fill="#4a4a4a"/>
<rect x="325" y="188.4" width="27.5" height="12.7" fill="#4a4a4a"/>
<rect x="353.5" y="188.4" width="27.5" height="12.7" fill="#4a4a4a"/>
<rect x="382" y="188.4" width="27.5" height="12.7" fill="#4a4a4a"/>
<rect x="410.5" y="188.4" width="27.5" height="12.7" fill="#4a4a4a"/>
<rect x="441" y="188.4" width="27.5" height="12.7" fill="#4a4a4a"/>
<rect x="469.5" y="188.4" width="27.5" height="12.7" fill="#4a4a4a"/>
<rect x="498" y="188.4" width="27.5" height="12.7" fill="#4a4a4a"/>
<rect x="526.5" y="188.4" width="27.5" height="12.7" fill="#4a4a4a"/>
<rect x="555" y="188.4" width="27.5" height="12.7" fill="#4a4a4a"/>
<rect x="583.5" y="188.4" width="27.5" height="12.7" fill="#4a4a4a"/>
<rect x="612" y="188.4" width="27.5" height="12.7" fill="#4a4a4a"/>
<rect x="640.5" y="188.4" width="27.5" height="12.7" fill="#4a4a4a"/>
<rect x="670.5" y="188.4" width="27.5" height="12.7" fill="#4a4a4a"/>
<rect x="699" y="188.4" width="27.5" height="12.7" fill="#4a4a4a"/>
<rect x="727.5" y="188.4" width="27.5" height="12.7" fill="#4a4a4a"/>
<rect x="756" y="188.4" width="27.5" height="12.7" fill="#4a4a4a"/>
<rect x="784.5" y="188.4" width="27.5" height="12.7" fill="#4a4a4a"/>
<rect x="200.7" y="201.15" width="64.8" height="0.5" fill="#262626"/>
<text x="203.4" y="210.87" font-size="7.75" fill="#c5c5c5" stroke="#c5c5c5" stroke-width="0.23" textLength="47.6" lengthAdjust="spacingAndGlyphs">LFO 1 Macro 1</text>
<rect x="266" y="201.9" width="27.5" height="12.7" fill="#4a4a4a"/>
<rect x="294.5" y="201.9" width="27.5" height="12.7" fill="#4a4a4a"/>
<rect x="325" y="201.9" width="27.5" height="12.7" fill="#4a4a4a"/>
<rect x="353.5" y="201.9" width="27.5" height="12.7" fill="#4a4a4a"/>
<rect x="382" y="201.9" width="27.5" height="12.7" fill="#4a4a4a"/>
<rect x="410.5" y="201.9" width="27.5" height="12.7" fill="#4a4a4a"/>
<rect x="441" y="201.9" width="27.5" height="12.7" fill="#4a4a4a"/>
<rect x="469.5" y="201.9" width="27.5" height="12.7" fill="#4a4a4a"/>
<rect x="498" y="201.9" width="27.5" height="12.7" fill="#4a4a4a"/>
<rect x="526.5" y="201.9" width="27.5" height="12.7" fill="#4a4a4a"/>
<rect x="555" y="201.9" width="27.5" height="12.7" fill="#4a4a4a"/>
<rect x="583.5" y="201.9" width="27.5" height="12.7" fill="#4a4a4a"/>
<rect x="612" y="201.9" width="27.5" height="12.7" fill="#4a4a4a"/>
<rect x="640.5" y="201.9" width="27.5" height="12.7" fill="#4a4a4a"/>
<rect x="670.5" y="201.9" width="27.5" height="12.7" fill="#4a4a4a"/>
<rect x="699" y="201.9" width="27.5" height="12.7" fill="#4a4a4a"/>
<rect x="727.5" y="201.9" width="27.5" height="12.7" fill="#4a4a4a"/>
<rect x="756" y="201.9" width="27.5" height="12.7" fill="#4a4a4a"/>
<rect x="784.5" y="201.9" width="27.5" height="12.7" fill="#4a4a4a"/>
<rect x="200.7" y="214.65" width="64.8" height="0.5" fill="#262626"/>
<text x="203.4" y="224.37" font-size="7.75" fill="#c5c5c5" stroke="#c5c5c5" stroke-width="0.23" textLength="48" lengthAdjust="spacingAndGlyphs">LFO 1 Macro 2</text>
<rect x="266" y="215.4" width="27.5" height="12.7" fill="#4a4a4a"/>
<rect x="294.5" y="215.4" width="27.5" height="12.7" fill="#4a4a4a"/>
<rect x="325" y="215.4" width="27.5" height="12.7" fill="#4a4a4a"/>
<rect x="353.5" y="215.4" width="27.5" height="12.7" fill="#4a4a4a"/>
<rect x="382" y="215.4" width="27.5" height="12.7" fill="#4a4a4a"/>
<rect x="410.5" y="215.4" width="27.5" height="12.7" fill="#4a4a4a"/>
<rect x="441" y="215.4" width="27.5" height="12.7" fill="#4a4a4a"/>
<rect x="469.5" y="215.4" width="27.5" height="12.7" fill="#4a4a4a"/>
<rect x="498" y="215.4" width="27.5" height="12.7" fill="#4a4a4a"/>
<rect x="526.5" y="215.4" width="27.5" height="12.7" fill="#4a4a4a"/>
<rect x="555" y="215.4" width="27.5" height="12.7" fill="#4a4a4a"/>
<rect x="583.5" y="215.4" width="27.5" height="12.7" fill="#4a4a4a"/>
<rect x="612" y="215.4" width="27.5" height="12.7" fill="#4a4a4a"/>
<rect x="640.5" y="215.4" width="27.5" height="12.7" fill="#4a4a4a"/>
<rect x="670.5" y="215.4" width="27.5" height="12.7" fill="#4a4a4a"/>
<rect x="699" y="215.4" width="27.5" height="12.7" fill="#4a4a4a"/>
<rect x="727.5" y="215.4" width="27.5" height="12.7" fill="#4a4a4a"/>
<rect x="756" y="215.4" width="27.5" height="12.7" fill="#4a4a4a"/>
<rect x="784.5" y="215.4" width="27.5" height="12.7" fill="#4a4a4a"/>
<rect x="200.7" y="228.15" width="64.8" height="0.5" fill="#262626"/>
<text x="203.4" y="237.87" font-size="7.75" fill="#c5c5c5" stroke="#c5c5c5" stroke-width="0.23" textLength="58.6" lengthAdjust="spacingAndGlyphs">LFO 1 FX 1 Macro</text>
<rect x="266" y="228.9" width="27.5" height="12.7" fill="#4a4a4a"/>
<rect x="294.5" y="228.9" width="27.5" height="12.7" fill="#4a4a4a"/>
<rect x="325" y="228.9" width="27.5" height="12.7" fill="#4a4a4a"/>
<rect x="353.5" y="228.9" width="27.5" height="12.7" fill="#4a4a4a"/>
<rect x="382" y="228.9" width="27.5" height="12.7" fill="#4a4a4a"/>
<rect x="410.5" y="228.9" width="27.5" height="12.7" fill="#4a4a4a"/>
<rect x="441" y="228.9" width="27.5" height="12.7" fill="#4a4a4a"/>
<rect x="469.5" y="228.9" width="27.5" height="12.7" fill="#4a4a4a"/>
<rect x="498" y="228.9" width="27.5" height="12.7" fill="#4a4a4a"/>
<rect x="526.5" y="228.9" width="27.5" height="12.7" fill="#4a4a4a"/>
<rect x="555" y="228.9" width="27.5" height="12.7" fill="#4a4a4a"/>
<rect x="583.5" y="228.9" width="27.5" height="12.7" fill="#4a4a4a"/>
<rect x="612" y="228.9" width="27.5" height="12.7" fill="#4a4a4a"/>
<rect x="640.5" y="228.9" width="27.5" height="12.7" fill="#4a4a4a"/>
<rect x="670.5" y="228.9" width="27.5" height="12.7" fill="#4a4a4a"/>
<rect x="699" y="228.9" width="27.5" height="12.7" fill="#4a4a4a"/>
<rect x="727.5" y="228.9" width="27.5" height="12.7" fill="#4a4a4a"/>
<rect x="756" y="228.9" width="27.5" height="12.7" fill="#4a4a4a"/>
<rect x="784.5" y="228.9" width="27.5" height="12.7" fill="#4a4a4a"/>
<rect x="200.7" y="241.65" width="64.8" height="0.5" fill="#262626"/>
<text x="203.4" y="251.37" font-size="7.75" fill="#c5c5c5" stroke="#c5c5c5" stroke-width="0.23" textLength="58.8" lengthAdjust="spacingAndGlyphs">LFO 1 FX 2 Macro</text>
<rect x="266" y="242.4" width="27.5" height="12.7" fill="#4a4a4a"/>
<rect x="294.5" y="242.4" width="27.5" height="12.7" fill="#4a4a4a"/>
<rect x="325" y="242.4" width="27.5" height="12.7" fill="#4a4a4a"/>
<rect x="353.5" y="242.4" width="27.5" height="12.7" fill="#4a4a4a"/>
<rect x="382" y="242.4" width="27.5" height="12.7" fill="#4a4a4a"/>
<rect x="410.5" y="242.4" width="27.5" height="12.7" fill="#4a4a4a"/>
<rect x="441" y="242.4" width="27.5" height="12.7" fill="#4a4a4a"/>
<rect x="469.5" y="242.4" width="27.5" height="12.7" fill="#4a4a4a"/>
<rect x="498" y="242.4" width="27.5" height="12.7" fill="#4a4a4a"/>
<rect x="526.5" y="242.4" width="27.5" height="12.7" fill="#4a4a4a"/>
<rect x="555" y="242.4" width="27.5" height="12.7" fill="#4a4a4a"/>
<rect x="583.5" y="242.4" width="27.5" height="12.7" fill="#4a4a4a"/>
<rect x="612" y="242.4" width="27.5" height="12.7" fill="#4a4a4a"/>
<rect x="640.5" y="242.4" width="27.5" height="12.7" fill="#4a4a4a"/>
<rect x="670.5" y="242.4" width="27.5" height="12.7" fill="#4a4a4a"/>
<rect x="699" y="242.4" width="27.5" height="12.7" fill="#4a4a4a"/>
<rect x="727.5" y="242.4" width="27.5" height="12.7" fill="#4a4a4a"/>
<rect x="756" y="242.4" width="27.5" height="12.7" fill="#4a4a4a"/>
<rect x="784.5" y="242.4" width="27.5" height="12.7" fill="#4a4a4a"/>
<rect x="200.7" y="255.15" width="64.8" height="0.5" fill="#262626"/>
<rect x="200.7" y="255.9" width="27" height="12.7" fill="#3d3d3d"/>
<text x="203.4" y="264.87" font-size="7.75" fill="#c5c5c5" stroke="#c5c5c5" stroke-width="0.23" textLength="36.6" lengthAdjust="spacingAndGlyphs">LFO 2 Rate</text>
<rect x="266" y="255.9" width="27.5" height="12.7" fill="#4a4a4a"/>
<rect x="294.5" y="255.9" width="27.5" height="12.7" fill="#4a4a4a"/>
<rect x="325" y="255.9" width="27.5" height="12.7" fill="#4a4a4a"/>
<rect x="353.5" y="255.9" width="27.5" height="12.7" fill="#4a4a4a"/>
<rect x="382" y="255.9" width="27.5" height="12.7" fill="#4a4a4a"/>
<rect x="410.5" y="255.9" width="27.5" height="12.7" fill="#4a4a4a"/>
<rect x="441" y="255.9" width="27.5" height="12.7" fill="#4a4a4a"/>
<rect x="469.5" y="255.9" width="27.5" height="12.7" fill="#4a4a4a"/>
<rect x="498" y="255.9" width="27.5" height="12.7" fill="#4a4a4a"/>
<rect x="526.5" y="255.9" width="27.5" height="12.7" fill="#4a4a4a"/>
<rect x="555" y="255.9" width="27.5" height="12.7" fill="#4a4a4a"/>
<rect x="583.5" y="255.9" width="27.5" height="12.7" fill="#4a4a4a"/>
<rect x="612" y="255.9" width="27.5" height="12.7" fill="#4a4a4a"/>
<rect x="640.5" y="255.9" width="27.5" height="12.7" fill="#4a4a4a"/>
<rect x="670.5" y="255.9" width="27.5" height="12.7" fill="#4a4a4a"/>
<rect x="699" y="255.9" width="27.5" height="12.7" fill="#4a4a4a"/>
<rect x="727.5" y="255.9" width="27.5" height="12.7" fill="#4a4a4a"/>
<rect x="756" y="255.9" width="27.5" height="12.7" fill="#4a4a4a"/>
<rect x="784.5" y="255.9" width="27.5" height="12.7" fill="#4a4a4a"/>
<rect x="200.7" y="268.65" width="64.8" height="0.5" fill="#262626"/>
<text x="203.4" y="278.37" font-size="7.75" fill="#c5c5c5" stroke="#c5c5c5" stroke-width="0.23" textLength="40.2" lengthAdjust="spacingAndGlyphs">Amp Attack</text>
<rect x="266" y="269.4" width="27.5" height="12.7" fill="#4a4a4a"/>
<rect x="294.5" y="269.4" width="27.5" height="12.7" fill="#4a4a4a"/>
<rect x="325" y="269.4" width="27.5" height="12.7" fill="#4a4a4a"/>
<rect x="353.5" y="269.4" width="27.5" height="12.7" fill="#4a4a4a"/>
<rect x="382" y="269.4" width="27.5" height="12.7" fill="#4a4a4a"/>
<rect x="410.5" y="269.4" width="27.5" height="12.7" fill="#4a4a4a"/>
<rect x="441" y="269.4" width="27.5" height="12.7" fill="#4a4a4a"/>
<rect x="469.5" y="269.4" width="27.5" height="12.7" fill="#4a4a4a"/>
<rect x="498" y="269.4" width="27.5" height="12.7" fill="#4a4a4a"/>
<rect x="526.5" y="269.4" width="27.5" height="12.7" fill="#4a4a4a"/>
<rect x="555" y="269.4" width="27.5" height="12.7" fill="#4a4a4a"/>
<rect x="583.5" y="269.4" width="27.5" height="12.7" fill="#4a4a4a"/>
<rect x="612" y="269.4" width="27.5" height="12.7" fill="#4a4a4a"/>
<rect x="640.5" y="269.4" width="27.5" height="12.7" fill="#4a4a4a"/>
<rect x="670.5" y="269.4" width="27.5" height="12.7" fill="#4a4a4a"/>
<rect x="699" y="269.4" width="27.5" height="12.7" fill="#4a4a4a"/>
<rect x="727.5" y="269.4" width="27.5" height="12.7" fill="#4a4a4a"/>
<rect x="756" y="269.4" width="27.5" height="12.7" fill="#4a4a4a"/>
<rect x="784.5" y="269.4" width="27.5" height="12.7" fill="#4a4a4a"/>
<rect x="200.7" y="282.15" width="64.8" height="0.5" fill="#262626"/>
<rect x="200.7" y="282.9" width="22.2" height="12.7" fill="#3d3d3d"/>
<text x="203.4" y="291.87" font-size="7.75" fill="#c5c5c5" stroke="#c5c5c5" stroke-width="0.23" textLength="37.8" lengthAdjust="spacingAndGlyphs">Amp Decay</text>
<rect x="266" y="282.9" width="27.5" height="12.7" fill="#4a4a4a"/>
<rect x="294.5" y="282.9" width="27.5" height="12.7" fill="#4a4a4a"/>
<rect x="325" y="282.9" width="27.5" height="12.7" fill="#4a4a4a"/>
<rect x="353.5" y="282.9" width="27.5" height="12.7" fill="#4a4a4a"/>
<rect x="382" y="282.9" width="27.5" height="12.7" fill="#4a4a4a"/>
<rect x="410.5" y="282.9" width="27.5" height="12.7" fill="#4a4a4a"/>
<rect x="441" y="282.9" width="27.5" height="12.7" fill="#4a4a4a"/>
<rect x="469.5" y="282.9" width="27.5" height="12.7" fill="#4a4a4a"/>
<rect x="498" y="282.9" width="27.5" height="12.7" fill="#4a4a4a"/>
<rect x="526.5" y="282.9" width="27.5" height="12.7" fill="#4a4a4a"/>
<rect x="555" y="282.9" width="27.5" height="12.7" fill="#4a4a4a"/>
<rect x="583.5" y="282.9" width="27.5" height="12.7" fill="#4a4a4a"/>
<rect x="612" y="282.9" width="27.5" height="12.7" fill="#4a4a4a"/>
<rect x="640.5" y="282.9" width="27.5" height="12.7" fill="#4a4a4a"/>
<rect x="670.5" y="282.9" width="27.5" height="12.7" fill="#4a4a4a"/>
<rect x="699" y="282.9" width="27.5" height="12.7" fill="#4a4a4a"/>
<rect x="727.5" y="282.9" width="27.5" height="12.7" fill="#4a4a4a"/>
<rect x="756" y="282.9" width="27.5" height="12.7" fill="#4a4a4a"/>
<rect x="784.5" y="282.9" width="27.5" height="12.7" fill="#4a4a4a"/>
<rect x="200.7" y="295.65" width="64.8" height="0.5" fill="#262626"/>
<rect x="200.7" y="296.4" width="12.2" height="12.7" fill="#3d3d3d"/>
<text x="203.4" y="305.37" font-size="7.75" fill="#c5c5c5" stroke="#c5c5c5" stroke-width="0.23" textLength="43.4" lengthAdjust="spacingAndGlyphs">Amp Release</text>
<rect x="266" y="296.4" width="27.5" height="12.7" fill="#4a4a4a"/>
<rect x="294.5" y="296.4" width="27.5" height="12.7" fill="#4a4a4a"/>
<rect x="325" y="296.4" width="27.5" height="12.7" fill="#4a4a4a"/>
<rect x="353.5" y="296.4" width="27.5" height="12.7" fill="#4a4a4a"/>
<rect x="382" y="296.4" width="27.5" height="12.7" fill="#4a4a4a"/>
<rect x="410.5" y="296.4" width="27.5" height="12.7" fill="#4a4a4a"/>
<rect x="441" y="296.4" width="27.5" height="12.7" fill="#4a4a4a"/>
<rect x="469.5" y="296.4" width="27.5" height="12.7" fill="#4a4a4a"/>
<rect x="498" y="296.4" width="27.5" height="12.7" fill="#4a4a4a"/>
<rect x="526.5" y="296.4" width="27.5" height="12.7" fill="#4a4a4a"/>
<rect x="555" y="296.4" width="27.5" height="12.7" fill="#4a4a4a"/>
<rect x="583.5" y="296.4" width="27.5" height="12.7" fill="#4a4a4a"/>
<rect x="612" y="296.4" width="27.5" height="12.7" fill="#4a4a4a"/>
<rect x="640.5" y="296.4" width="27.5" height="12.7" fill="#4a4a4a"/>
<rect x="670.5" y="296.4" width="27.5" height="12.7" fill="#4a4a4a"/>
<rect x="699" y="296.4" width="27.5" height="12.7" fill="#4a4a4a"/>
<rect x="727.5" y="296.4" width="27.5" height="12.7" fill="#4a4a4a"/>
<rect x="756" y="296.4" width="27.5" height="12.7" fill="#4a4a4a"/>
<rect x="784.5" y="296.4" width="27.5" height="12.7" fill="#4a4a4a"/>
<rect x="200.7" y="309.15" width="64.8" height="0.5" fill="#262626"/>
<rect x="200.7" y="309.9" width="64.8" height="12.7" fill="#3d3d3d"/>
<text x="203.4" y="318.87" font-size="7.75" fill="#c5c5c5" stroke="#c5c5c5" stroke-width="0.23" textLength="42.6" lengthAdjust="spacingAndGlyphs">Amp Sustain</text>
<rect x="266" y="309.9" width="27.5" height="12.7" fill="#4a4a4a"/>
<rect x="294.5" y="309.9" width="27.5" height="12.7" fill="#4a4a4a"/>
<rect x="325" y="309.9" width="27.5" height="12.7" fill="#4a4a4a"/>
<rect x="353.5" y="309.9" width="27.5" height="12.7" fill="#4a4a4a"/>
<rect x="382" y="309.9" width="27.5" height="12.7" fill="#4a4a4a"/>
<rect x="410.5" y="309.9" width="27.5" height="12.7" fill="#4a4a4a"/>
<rect x="441" y="309.9" width="27.5" height="12.7" fill="#4a4a4a"/>
<rect x="469.5" y="309.9" width="27.5" height="12.7" fill="#4a4a4a"/>
<rect x="498" y="309.9" width="27.5" height="12.7" fill="#4a4a4a"/>
<rect x="526.5" y="309.9" width="27.5" height="12.7" fill="#4a4a4a"/>
<rect x="555" y="309.9" width="27.5" height="12.7" fill="#4a4a4a"/>
<rect x="583.5" y="309.9" width="27.5" height="12.7" fill="#4a4a4a"/>
<rect x="612" y="309.9" width="27.5" height="12.7" fill="#4a4a4a"/>
<rect x="640.5" y="309.9" width="27.5" height="12.7" fill="#4a4a4a"/>
<rect x="670.5" y="309.9" width="27.5" height="12.7" fill="#4a4a4a"/>
<rect x="699" y="309.9" width="27.5" height="12.7" fill="#4a4a4a"/>
<rect x="727.5" y="309.9" width="27.5" height="12.7" fill="#4a4a4a"/>
<rect x="756" y="309.9" width="27.5" height="12.7" fill="#4a4a4a"/>
<rect x="784.5" y="309.9" width="27.5" height="12.7" fill="#4a4a4a"/>
<rect x="200.7" y="322.65" width="64.8" height="0.5" fill="#262626"/>
<text x="203.4" y="332.37" font-size="7.75" fill="#c5c5c5" stroke="#c5c5c5" stroke-width="0.23" textLength="40.2" lengthAdjust="spacingAndGlyphs">Mod Attack</text>
<rect x="266" y="323.4" width="27.5" height="12.7" fill="#4a4a4a"/>
<rect x="294.5" y="323.4" width="27.5" height="12.7" fill="#4a4a4a"/>
<rect x="325" y="323.4" width="27.5" height="12.7" fill="#4a4a4a"/>
<rect x="353.5" y="323.4" width="27.5" height="12.7" fill="#4a4a4a"/>
<rect x="382" y="323.4" width="27.5" height="12.7" fill="#4a4a4a"/>
<rect x="410.5" y="323.4" width="27.5" height="12.7" fill="#4a4a4a"/>
<rect x="441" y="323.4" width="27.5" height="12.7" fill="#4a4a4a"/>
<rect x="469.5" y="323.4" width="27.5" height="12.7" fill="#4a4a4a"/>
<rect x="498" y="323.4" width="27.5" height="12.7" fill="#4a4a4a"/>
<rect x="526.5" y="323.4" width="27.5" height="12.7" fill="#4a4a4a"/>
<rect x="555" y="323.4" width="27.5" height="12.7" fill="#4a4a4a"/>
<rect x="583.5" y="323.4" width="27.5" height="12.7" fill="#4a4a4a"/>
<rect x="612" y="323.4" width="27.5" height="12.7" fill="#4a4a4a"/>
<rect x="640.5" y="323.4" width="27.5" height="12.7" fill="#4a4a4a"/>
<rect x="670.5" y="323.4" width="27.5" height="12.7" fill="#4a4a4a"/>
<rect x="699" y="323.4" width="27.5" height="12.7" fill="#4a4a4a"/>
<rect x="727.5" y="323.4" width="27.5" height="12.7" fill="#4a4a4a"/>
<rect x="756" y="323.4" width="27.5" height="12.7" fill="#4a4a4a"/>
<rect x="784.5" y="323.4" width="27.5" height="12.7" fill="#4a4a4a"/>
<rect x="200.7" y="336.15" width="64.8" height="0.5" fill="#262626"/>
<rect x="200.7" y="336.9" width="22.2" height="12.7" fill="#3d3d3d"/>
<text x="203.4" y="345.87" font-size="7.75" fill="#c5c5c5" stroke="#c5c5c5" stroke-width="0.23" textLength="37.8" lengthAdjust="spacingAndGlyphs">Mod Decay</text>
<rect x="266" y="336.9" width="27.5" height="12.7" fill="#4a4a4a"/>
<rect x="294.5" y="336.9" width="27.5" height="12.7" fill="#4a4a4a"/>
<rect x="325" y="336.9" width="27.5" height="12.7" fill="#4a4a4a"/>
<rect x="353.5" y="336.9" width="27.5" height="12.7" fill="#4a4a4a"/>
<rect x="382" y="336.9" width="27.5" height="12.7" fill="#4a4a4a"/>
<rect x="410.5" y="336.9" width="27.5" height="12.7" fill="#4a4a4a"/>
<rect x="441" y="336.9" width="27.5" height="12.7" fill="#4a4a4a"/>
<rect x="469.5" y="336.9" width="27.5" height="12.7" fill="#4a4a4a"/>
<rect x="498" y="336.9" width="27.5" height="12.7" fill="#4a4a4a"/>
<rect x="526.5" y="336.9" width="27.5" height="12.7" fill="#4a4a4a"/>
<rect x="555" y="336.9" width="27.5" height="12.7" fill="#4a4a4a"/>
<rect x="583.5" y="336.9" width="27.5" height="12.7" fill="#4a4a4a"/>
<rect x="612" y="336.9" width="27.5" height="12.7" fill="#4a4a4a"/>
<rect x="640.5" y="336.9" width="27.5" height="12.7" fill="#4a4a4a"/>
<rect x="670.5" y="336.9" width="27.5" height="12.7" fill="#4a4a4a"/>
<rect x="699" y="336.9" width="27.5" height="12.7" fill="#4a4a4a"/>
<rect x="727.5" y="336.9" width="27.5" height="12.7" fill="#4a4a4a"/>
<rect x="756" y="336.9" width="27.5" height="12.7" fill="#4a4a4a"/>
<rect x="784.5" y="336.9" width="27.5" height="12.7" fill="#4a4a4a"/>
<rect x="200.7" y="349.65" width="64.8" height="0.5" fill="#262626"/>
<rect x="200.7" y="350.4" width="12.2" height="12.7" fill="#3d3d3d"/>
<text x="203.4" y="359.37" font-size="7.75" fill="#c5c5c5" stroke="#c5c5c5" stroke-width="0.23" textLength="43.4" lengthAdjust="spacingAndGlyphs">Mod Release</text>
<rect x="266" y="350.4" width="27.5" height="12.7" fill="#4a4a4a"/>
<rect x="294.5" y="350.4" width="27.5" height="12.7" fill="#4a4a4a"/>
<rect x="325" y="350.4" width="27.5" height="12.7" fill="#4a4a4a"/>
<rect x="353.5" y="350.4" width="27.5" height="12.7" fill="#4a4a4a"/>
<rect x="382" y="350.4" width="27.5" height="12.7" fill="#4a4a4a"/>
<rect x="410.5" y="350.4" width="27.5" height="12.7" fill="#4a4a4a"/>
<rect x="441" y="350.4" width="27.5" height="12.7" fill="#4a4a4a"/>
<rect x="469.5" y="350.4" width="27.5" height="12.7" fill="#4a4a4a"/>
<rect x="498" y="350.4" width="27.5" height="12.7" fill="#4a4a4a"/>
<rect x="526.5" y="350.4" width="27.5" height="12.7" fill="#4a4a4a"/>
<rect x="555" y="350.4" width="27.5" height="12.7" fill="#4a4a4a"/>
<rect x="583.5" y="350.4" width="27.5" height="12.7" fill="#4a4a4a"/>
<rect x="612" y="350.4" width="27.5" height="12.7" fill="#4a4a4a"/>
<rect x="640.5" y="350.4" width="27.5" height="12.7" fill="#4a4a4a"/>
<rect x="670.5" y="350.4" width="27.5" height="12.7" fill="#4a4a4a"/>
<rect x="699" y="350.4" width="27.5" height="12.7" fill="#4a4a4a"/>
<rect x="727.5" y="350.4" width="27.5" height="12.7" fill="#4a4a4a"/>
<rect x="756" y="350.4" width="27.5" height="12.7" fill="#4a4a4a"/>
<rect x="784.5" y="350.4" width="27.5" height="12.7" fill="#4a4a4a"/>
<rect x="200.7" y="363.15" width="64.8" height="0.5" fill="#262626"/>
<text x="203.4" y="372.87" font-size="7.75" fill="#c5c5c5" stroke="#c5c5c5" stroke-width="0.23" textLength="42.6" lengthAdjust="spacingAndGlyphs">Mod Sustain</text>
<rect x="266" y="363.9" width="27.5" height="12.7" fill="#4a4a4a"/>
<rect x="294.5" y="363.9" width="27.5" height="12.7" fill="#4a4a4a"/>
<rect x="325" y="363.9" width="27.5" height="12.7" fill="#4a4a4a"/>
<rect x="353.5" y="363.9" width="27.5" height="12.7" fill="#4a4a4a"/>
<rect x="382" y="363.9" width="27.5" height="12.7" fill="#4a4a4a"/>
<rect x="410.5" y="363.9" width="27.5" height="12.7" fill="#4a4a4a"/>
<rect x="441" y="363.9" width="27.5" height="12.7" fill="#4a4a4a"/>
<rect x="469.5" y="363.9" width="27.5" height="12.7" fill="#4a4a4a"/>
<rect x="498" y="363.9" width="27.5" height="12.7" fill="#4a4a4a"/>
<rect x="526.5" y="363.9" width="27.5" height="12.7" fill="#4a4a4a"/>
<rect x="555" y="363.9" width="27.5" height="12.7" fill="#4a4a4a"/>
<rect x="583.5" y="363.9" width="27.5" height="12.7" fill="#4a4a4a"/>
<rect x="612" y="363.9" width="27.5" height="12.7" fill="#4a4a4a"/>
<rect x="640.5" y="363.9" width="27.5" height="12.7" fill="#4a4a4a"/>
<rect x="670.5" y="363.9" width="27.5" height="12.7" fill="#4a4a4a"/>
<rect x="699" y="363.9" width="27.5" height="12.7" fill="#4a4a4a"/>
<rect x="727.5" y="363.9" width="27.5" height="12.7" fill="#4a4a4a"/>
<rect x="756" y="363.9" width="27.5" height="12.7" fill="#4a4a4a"/>
<rect x="784.5" y="363.9" width="27.5" height="12.7" fill="#4a4a4a"/>
<rect x="200.7" y="376.65" width="64.8" height="0.5" fill="#262626"/>
<rect x="200.7" y="377.4" width="32.3" height="12.7" fill="#3d3d3d"/>
<text x="203.4" y="386.37" font-size="7.75" fill="#c5c5c5" stroke="#c5c5c5" stroke-width="0.23" textLength="36.4" lengthAdjust="spacingAndGlyphs">Tone Filter</text>
<rect x="266" y="377.4" width="27.5" height="12.7" fill="#4a4a4a"/>
<rect x="294.5" y="377.4" width="27.5" height="12.7" fill="#4a4a4a"/>
<rect x="325" y="377.4" width="27.5" height="12.7" fill="#4a4a4a"/>
<rect x="353.5" y="377.4" width="27.5" height="12.7" fill="#4a4a4a"/>
<rect x="382" y="377.4" width="27.5" height="12.7" fill="#4a4a4a"/>
<rect x="410.5" y="377.4" width="27.5" height="12.7" fill="#4a4a4a"/>
<rect x="441" y="377.4" width="27.5" height="12.7" fill="#4a4a4a"/>
<rect x="469.5" y="377.4" width="27.5" height="12.7" fill="#4a4a4a"/>
<rect x="498" y="377.4" width="27.5" height="12.7" fill="#4a4a4a"/>
<rect x="526.5" y="377.4" width="27.5" height="12.7" fill="#4a4a4a"/>
<rect x="555" y="377.4" width="27.5" height="12.7" fill="#4a4a4a"/>
<rect x="583.5" y="377.4" width="27.5" height="12.7" fill="#4a4a4a"/>
<rect x="612" y="377.4" width="27.5" height="12.7" fill="#4a4a4a"/>
<rect x="640.5" y="377.4" width="27.5" height="12.7" fill="#4a4a4a"/>
<rect x="670.5" y="377.4" width="27.5" height="12.7" fill="#4a4a4a"/>
<rect x="699" y="377.4" width="27.5" height="12.7" fill="#4a4a4a"/>
<rect x="727.5" y="377.4" width="27.5" height="12.7" fill="#4a4a4a"/>
<rect x="756" y="377.4" width="27.5" height="12.7" fill="#4a4a4a"/>
<rect x="784.5" y="377.4" width="27.5" height="12.7" fill="#4a4a4a"/>
<rect x="200.7" y="390.15" width="64.8" height="0.5" fill="#262626"/>
<rect x="200.7" y="390.9" width="32.3" height="12.7" fill="#3d3d3d"/>
<text x="203.4" y="399.87" font-size="7.75" fill="#c5c5c5" stroke="#c5c5c5" stroke-width="0.23" textLength="12.6" lengthAdjust="spacingAndGlyphs">Pan</text>
<rect x="266" y="390.9" width="27.5" height="12.7" fill="#4a4a4a"/>
<rect x="294.5" y="390.9" width="27.5" height="12.7" fill="#4a4a4a"/>
<rect x="325" y="390.9" width="27.5" height="12.7" fill="#4a4a4a"/>
<rect x="353.5" y="390.9" width="27.5" height="12.7" fill="#4a4a4a"/>
<rect x="382" y="390.9" width="27.5" height="12.7" fill="#4a4a4a"/>
<rect x="410.5" y="390.9" width="27.5" height="13.2" fill="#242424"/>
<rect x="410.5" y="402.5" width="27.5" height="0.7" fill="#0f5761"/>
<rect x="423.95" y="402.2" width="7" height="1.5" fill="#03e9fc" rx="0.5"/>
<text x="424.65" y="398.95" font-size="7.4" fill="#19cfe3" text-anchor="middle" stroke="#19cfe3" stroke-width="0.32">50</text>
<rect x="441" y="390.9" width="27.5" height="12.7" fill="#4a4a4a"/>
<rect x="469.5" y="390.9" width="27.5" height="12.7" fill="#4a4a4a"/>
<rect x="498" y="390.9" width="27.5" height="12.7" fill="#4a4a4a"/>
<rect x="526.5" y="390.9" width="27.5" height="12.7" fill="#4a4a4a"/>
<rect x="555" y="390.9" width="27.5" height="12.7" fill="#4a4a4a"/>
<rect x="583.5" y="390.9" width="27.5" height="12.7" fill="#4a4a4a"/>
<rect x="612" y="390.9" width="27.5" height="12.7" fill="#4a4a4a"/>
<rect x="640.5" y="390.9" width="27.5" height="12.7" fill="#4a4a4a"/>
<rect x="670.5" y="390.9" width="27.5" height="12.7" fill="#4a4a4a"/>
<rect x="699" y="390.9" width="27.5" height="12.7" fill="#4a4a4a"/>
<rect x="727.5" y="390.9" width="27.5" height="12.7" fill="#4a4a4a"/>
<rect x="756" y="390.9" width="27.5" height="12.7" fill="#4a4a4a"/>
<rect x="784.5" y="390.9" width="27.5" height="12.7" fill="#4a4a4a"/>
<rect x="200.7" y="403.65" width="64.8" height="0.5" fill="#262626"/>
<rect x="200.7" y="404.4" width="41.3" height="12.7" fill="#3d3d3d"/>
<text x="203.4" y="413.37" font-size="7.75" fill="#c5c5c5" stroke="#c5c5c5" stroke-width="0.23" textLength="25.2" lengthAdjust="spacingAndGlyphs">Volume</text>
<rect x="266" y="404.4" width="27.5" height="12.7" fill="#4a4a4a"/>
<rect x="294.5" y="404.4" width="27.5" height="12.7" fill="#4a4a4a"/>
<rect x="325" y="404.4" width="27.5" height="12.7" fill="#4a4a4a"/>
<rect x="353.5" y="404.4" width="27.5" height="12.7" fill="#4a4a4a"/>
<rect x="382" y="404.4" width="27.5" height="12.7" fill="#4a4a4a"/>
<rect x="410.5" y="404.4" width="27.5" height="12.7" fill="#4a4a4a"/>
<rect x="441" y="404.4" width="27.5" height="13.2" fill="#242424"/>
<rect x="441" y="416" width="27.5" height="0.7" fill="#0f5761"/>
<rect x="454.45" y="415.7" width="7" height="1.5" fill="#03e9fc" rx="0.5"/>
<text x="455.15" y="412.45" font-size="7.4" fill="#19cfe3" text-anchor="middle" stroke="#19cfe3" stroke-width="0.32">50</text>
<rect x="469.5" y="404.4" width="27.5" height="12.7" fill="#4a4a4a"/>
<rect x="498" y="404.4" width="27.5" height="12.7" fill="#4a4a4a"/>
<rect x="526.5" y="404.4" width="27.5" height="12.7" fill="#4a4a4a"/>
<rect x="555" y="404.4" width="27.5" height="12.7" fill="#4a4a4a"/>
<rect x="583.5" y="404.4" width="27.5" height="12.7" fill="#4a4a4a"/>
<rect x="612" y="404.4" width="27.5" height="12.7" fill="#4a4a4a"/>
<rect x="640.5" y="404.4" width="27.5" height="12.7" fill="#4a4a4a"/>
<rect x="670.5" y="404.4" width="27.5" height="12.7" fill="#4a4a4a"/>
<rect x="699" y="404.4" width="27.5" height="12.7" fill="#4a4a4a"/>
<rect x="727.5" y="404.4" width="27.5" height="12.7" fill="#4a4a4a"/>
<rect x="756" y="404.4" width="27.5" height="12.7" fill="#4a4a4a"/>
<rect x="784.5" y="404.4" width="27.5" height="12.7" fill="#4a4a4a"/>
</g>
<g id="device-view">
<rect x="5.3" y="478.9" width="1013.3" height="136" fill="#3c3c3c" rx="3.7"/>
<rect x="5.9" y="479.9" width="1012.1" height="133.9" fill="#808080" rx="3"/>
<rect x="666" y="479.95" width="352" height="133.75" fill="#a6a6a6" rx="2.6"/>
<text x="841.4" y="549.05" font-size="7.4" fill="#2b2b2b" text-anchor="middle" stroke="#2b2b2b" stroke-width="0.28" textLength="83.2" lengthAdjust="spacingAndGlyphs">Drop Audio Effects Here</text>
<rect x="5.9" y="479.95" width="654.2" height="133.75" fill="#bebebe" rx="2.6"/>
<rect x="661" y="508.2" width="4" height="7.7" fill="#3e3e3e"/>
<rect x="661" y="517.1" width="4" height="67.9" fill="#3e3e3e"/>
<rect x="662.85" y="508.2" width="0.3" height="76.8" fill="#4a4a4a"/>
<circle cx="13.1" cy="485.9" r="4.1" fill="#fdb90c" stroke="#8a6a10" stroke-width="0.4"/>
<circle cx="24.4" cy="485.9" r="4.1" fill="#d0d0d0" stroke="#6a6a6a" stroke-width="0.5"/>
<text x="138" y="488.92" font-size="7.6" fill="#1c1c1c" text-anchor="middle" stroke="#1c1c1c" stroke-width="0.38" textLength="27" lengthAdjust="spacingAndGlyphs">Engines</text>
<text x="515.6" y="488.92" font-size="7.6" fill="#1c1c1c" text-anchor="middle" stroke="#1c1c1c" stroke-width="0.38" textLength="22" lengthAdjust="spacingAndGlyphs">Filters</text>
<text x="572.9" y="488.92" font-size="7.6" fill="#1c1c1c" text-anchor="middle" stroke="#1c1c1c" stroke-width="0.38" textLength="12" lengthAdjust="spacingAndGlyphs">Mix</text>
<rect x="586.2" y="481.5" width="20.6" height="9" fill="#cdcdcd" rx="0.8" stroke="#585858" stroke-width="0.7"/>
<text x="596.4" y="488.65" font-size="7.4" fill="#1c1c1c" text-anchor="middle" stroke="#1c1c1c" stroke-width="0.15" textLength="16.2" lengthAdjust="spacingAndGlyphs">Limit</text>
<circle cx="611.9" cy="486" r="2.4" fill="#6e6e6e"/>
<rect x="626.2" y="481.5" width="8.5" height="9" fill="#d6d6d6" rx="0.6" stroke="#6e6e6e" stroke-width="0.7"/>
<text x="627" y="488.75" font-size="4.9" fill="#2a2a2a" stroke="#2a2a2a" stroke-width="0.5" style='font-family:"DejaVu Sans", sans-serif'>♭</text>
<rect x="630.3" y="483.2" width="2.4" height="2.4" fill="#444"/>
<circle cx="641.7" cy="486" r="4.25" fill="#d2d2d2" stroke="#585858" stroke-width="0.9"/>
<path d="M639.2 486.6 C639.3 485.2 640 484.4 640.9 483.8 M642.3 488.2 C643.4 487.5 644 486.7 644.1 485.5" fill="none" stroke="#2e2e2e" stroke-width="1.1"/>
<circle cx="653.05" cy="486" r="4.25" fill="#d2d2d2" stroke="#585858" stroke-width="0.9"/>
<rect x="651.1" y="483.9" width="3.9" height="4" fill="#1e1e1e"/>
<rect x="652.4" y="483.8" width="1.3" height="1.4" fill="#cfcfcf"/>
<path d="M237.4 492.6 V483.2 a2 2 0 0 1 2 -2 H296 a2 2 0 0 1 2 2 V492.6 z" fill="#242424"/>
<text x="267.7" y="489.02" font-size="7.6" fill="#19cfe3" text-anchor="middle" stroke="#19cfe3" stroke-width="0.38">A</text>
<rect x="298.9" y="481.2" width="60.5" height="10.2" fill="#a9a9a9" rx="2"/>
<text x="329.3" y="489.02" font-size="7.6" fill="#2e2e2e" text-anchor="middle" stroke="#2e2e2e" stroke-width="0.2">B</text>
<rect x="361.5" y="481.2" width="60.4" height="10.2" fill="#a9a9a9" rx="2"/>
<text x="391.6" y="489.02" font-size="7.6" fill="#2a2a2a" text-anchor="middle" stroke="#2a2a2a" stroke-width="0.18" textLength="29" lengthAdjust="spacingAndGlyphs">Settings</text>
<rect x="8.2" y="492.4" width="81.5" height="58.1" fill="#242424" rx="1.2"/>
<rect x="11" y="495.25" width="9.1" height="9.05" fill="#03e9fc"/>
<text x="15.5" y="502.42" font-size="7.6" fill="#1c3a40" text-anchor="middle" stroke="#1c3a40" stroke-width="0.28">A</text>
<rect x="22.8" y="495.25" width="64.1" height="9.05" fill="#03e9fc"/>
<text x="24.6" y="502.42" font-size="7.6" fill="#0e353a" stroke="#0e353a" stroke-width="0.32" textLength="44.2" lengthAdjust="spacingAndGlyphs">Basic Shapes</text>
<path d="M80.35 497.9 h4.7 l-2.35 3.6 z" fill="#1a1a1a"/>
<circle cx="16" cy="521.5" r="5" fill="none" stroke="#4b4b4b" stroke-width="0.95"/>
<path d="M14.1 521.5 l3.3 -1.9 v3.8 z" fill="#14e2f4"/>
<circle cx="81.5" cy="521.5" r="5" fill="none" stroke="#4b4b4b" stroke-width="0.95"/>
<path d="M83.4 521.5 l-3.3 -1.9 v3.8 z" fill="#14e2f4"/>
<path d="M38.6 514.8 V511.7 H48.6 V514.5 H58.4 V511.2" fill="none" stroke="#17c4d4" stroke-width="1.2"/>
<path d="M38.6 520.2 L58.4 516.7 V520.5" fill="none" stroke="#17c4d4" stroke-width="1.2"/>
<path d="M38.6 525.1 C41.5 524 43 523.2 45.3 523.6 S50.5 526.5 53.4 526.4 S57 525.2 58.4 524.6" fill="none" stroke="#17c4d4" stroke-width="1.2"/>
<path d="M38.6 530.4 C40.5 528.8 42.5 527.7 44.5 527.8 C48 527.9 49.5 531.9 53.5 531.9 C55.5 531.9 57.2 530.8 58.4 529.3" fill="none" stroke="#17c4d4" stroke-width="1.2"/>
<text x="12.1" y="546.52" font-size="7.6" fill="#17c4d4" stroke="#17c4d4" stroke-width="0.34" textLength="17.3" lengthAdjust="spacingAndGlyphs">0 oct</text>
<text x="42.8" y="546.52" font-size="7.6" fill="#17c4d4" stroke="#17c4d4" stroke-width="0.34" textLength="12.2" lengthAdjust="spacingAndGlyphs">0 st</text>
<text x="71.9" y="546.52" font-size="7.6" fill="#17c4d4" stroke="#17c4d4" stroke-width="0.34" textLength="13.1" lengthAdjust="spacingAndGlyphs">0 ct</text>
<rect x="8.2" y="552.7" width="81.5" height="59" fill="#242424" rx="1.2"/>
<rect x="11" y="555.65" width="9.1" height="9.05" fill="#fdb90c"/>
<text x="15.5" y="562.82" font-size="7.6" fill="#5a4104" text-anchor="middle" stroke="#5a4104" stroke-width="0.28">B</text>
<rect x="22.8" y="555.65" width="64.1" height="9.05" fill="#fdb90c"/>
<text x="24.6" y="562.82" font-size="7.6" fill="#4e3803" stroke="#4e3803" stroke-width="0.32" textLength="44.2" lengthAdjust="spacingAndGlyphs">Basic Shapes</text>
<path d="M80.35 558.3 h4.7 l-2.35 3.6 z" fill="#1a1a1a"/>
<circle cx="16" cy="581.9" r="5" fill="none" stroke="#4b4b4b" stroke-width="0.95"/>
<path d="M14.1 581.9 l3.3 -1.9 v3.8 z" fill="#f6b40e"/>
<circle cx="81.5" cy="581.9" r="5" fill="none" stroke="#4b4b4b" stroke-width="0.95"/>
<path d="M83.4 581.9 l-3.3 -1.9 v3.8 z" fill="#f6b40e"/>
<path d="M38.6 575.2 V572.1 H48.6 V574.9 H58.4 V571.6" fill="none" stroke="#dca311" stroke-width="1.2"/>
<path d="M38.6 580.6 L58.4 577.1 V580.9" fill="none" stroke="#dca311" stroke-width="1.2"/>
<path d="M38.6 585.5 C41.5 584.4 43 583.6 45.3 584 S50.5 586.9 53.4 586.8 S57 585.6 58.4 585" fill="none" stroke="#dca311" stroke-width="1.2"/>
<path d="M38.6 590.8 C40.5 589.2 42.5 588.1 44.5 588.2 C48 588.3 49.5 592.3 53.5 592.3 C55.5 592.3 57.2 591.2 58.4 589.7" fill="none" stroke="#dca311" stroke-width="1.2"/>
<text x="12.1" y="606.92" font-size="7.6" fill="#dca311" stroke="#dca311" stroke-width="0.34" textLength="17.3" lengthAdjust="spacingAndGlyphs">0 oct</text>
<text x="42.8" y="606.92" font-size="7.6" fill="#dca311" stroke="#dca311" stroke-width="0.34" textLength="12.2" lengthAdjust="spacingAndGlyphs">0 st</text>
<text x="71.9" y="606.92" font-size="7.6" fill="#dca311" stroke="#dca311" stroke-width="0.34" textLength="13.1" lengthAdjust="spacingAndGlyphs">0 ct</text>
<rect x="2" y="512.1" width="2" height="1.8" fill="#484848" rx="0.3"/>
<rect x="2" y="515.67" width="2" height="1.8" fill="#484848" rx="0.3"/>
<rect x="2" y="519.24" width="2" height="1.8" fill="#484848" rx="0.3"/>
<rect x="2" y="522.81" width="2" height="1.8" fill="#484848" rx="0.3"/>
<rect x="2" y="526.38" width="2" height="1.8" fill="#484848" rx="0.3"/>
<rect x="2" y="529.95" width="2" height="1.8" fill="#484848" rx="0.3"/>
<rect x="2" y="533.52" width="2" height="1.8" fill="#484848" rx="0.3"/>
<rect x="2" y="537.09" width="2" height="1.8" fill="#484848" rx="0.3"/>
<rect x="2" y="540.66" width="2" height="1.8" fill="#484848" rx="0.3"/>
<rect x="2" y="544.23" width="2" height="1.8" fill="#484848" rx="0.3"/>
<rect x="2" y="547.8" width="2" height="1.8" fill="#484848" rx="0.3"/>
<rect x="2" y="551.37" width="2" height="1.8" fill="#484848" rx="0.3"/>
<rect x="2" y="554.94" width="2" height="1.8" fill="#484848" rx="0.3"/>
<rect x="2" y="558.51" width="2" height="1.8" fill="#484848" rx="0.3"/>
<rect x="2" y="562.08" width="2" height="1.8" fill="#484848" rx="0.3"/>
<rect x="2" y="565.65" width="2" height="1.8" fill="#484848" rx="0.3"/>
<rect x="2" y="569.22" width="2" height="1.8" fill="#484848" rx="0.3"/>
<rect x="2" y="572.79" width="2" height="1.8" fill="#484848" rx="0.3"/>
<rect x="2" y="576.36" width="2" height="1.8" fill="#484848" rx="0.3"/>
<rect x="2" y="579.93" width="2" height="1.8" fill="#484848" rx="0.3"/>
<rect x="2" y="583.5" width="2" height="1.8" fill="#484848" rx="0.3"/>
<rect x="90.3" y="492.1" width="97.3" height="58.4" fill="#a8a8a8" rx="1.5"/>
<text x="118.9" y="505.32" font-size="7.6" fill="#2a2a2a" text-anchor="middle" stroke="#2a2a2a" stroke-width="0.28" textLength="21.2" lengthAdjust="spacingAndGlyphs">Shape</text>
<path d="M111.84 532.34 A12.35 12.35 0 1 1 126.36 532.34" fill="none" stroke="#262626" stroke-width="1.95" stroke-linecap="butt"/>
<line x1="117.65" y1="524.35" x2="111.33" y2="533.04" stroke="#262626" stroke-width="1.75"/>
<text x="118.5" y="542.22" font-size="7.6" fill="#2a2a2a" text-anchor="middle" stroke="#2a2a2a" stroke-width="0.28" textLength="10.6" lengthAdjust="spacingAndGlyphs">0.0</text>
<text x="159.7" y="505.32" font-size="7.6" fill="#2a2a2a" text-anchor="middle" stroke="#2a2a2a" stroke-width="0.28" textLength="16.2" lengthAdjust="spacingAndGlyphs">Tone</text>
<path d="M152.64 532.34 A12.35 12.35 0 1 1 167.16 532.34" fill="none" stroke="#262626" stroke-width="1.95" stroke-linecap="butt"/>
<line x1="158.45" y1="524.35" x2="152.13" y2="533.04" stroke="#262626" stroke-width="1.75"/>
<text x="159.3" y="542.22" font-size="7.6" fill="#2a2a2a" text-anchor="middle" stroke="#2a2a2a" stroke-width="0.28" textLength="10.6" lengthAdjust="spacingAndGlyphs">0.0</text>
<rect x="90.3" y="552.7" width="97.3" height="59" fill="#a8a8a8" rx="1.5"/>
<text x="118.9" y="566.57" font-size="7.6" fill="#2a2a2a" text-anchor="middle" stroke="#2a2a2a" stroke-width="0.28" textLength="21.2" lengthAdjust="spacingAndGlyphs">Shape</text>
<path d="M111.84 593.59 A12.35 12.35 0 1 1 126.36 593.59" fill="none" stroke="#262626" stroke-width="1.95" stroke-linecap="butt"/>
<line x1="117.65" y1="585.6" x2="111.33" y2="594.29" stroke="#262626" stroke-width="1.75"/>
<text x="118.5" y="603.47" font-size="7.6" fill="#2a2a2a" text-anchor="middle" stroke="#2a2a2a" stroke-width="0.28" textLength="10.6" lengthAdjust="spacingAndGlyphs">0.0</text>
<text x="159.7" y="566.57" font-size="7.6" fill="#2a2a2a" text-anchor="middle" stroke="#2a2a2a" stroke-width="0.28" textLength="16.2" lengthAdjust="spacingAndGlyphs">Tone</text>
<path d="M152.64 593.59 A12.35 12.35 0 1 1 167.16 593.59" fill="none" stroke="#262626" stroke-width="1.95" stroke-linecap="butt"/>
<line x1="158.45" y1="585.6" x2="152.13" y2="594.29" stroke="#262626" stroke-width="1.75"/>
<text x="159.3" y="603.47" font-size="7.6" fill="#2a2a2a" text-anchor="middle" stroke="#2a2a2a" stroke-width="0.28" textLength="10.6" lengthAdjust="spacingAndGlyphs">0.0</text>
<path d="M189.2 611.9 V493.6 a1.5 1.5 0 0 1 1.5 -1.5 H470.8 a2 2 0 0 1 2 2 V611.9 z" fill="#242424"/>
<rect x="189.5" y="505.9" width="283.3" height="0.9" fill="#3a3a3a"/>
<rect x="189.5" y="564.2" width="283.3" height="0.9" fill="#3a3a3a"/>
<rect x="330.5" y="506.8" width="0.9" height="105.1" fill="#3a3a3a"/>
<rect x="219.9" y="494.3" width="11.8" height="9.1" fill="none" stroke="#15b4c6" stroke-width="0.8"/>
<path d="M221.9 498.8 c1.2 -2.6 6.4 -2.6 7.7 0 c-1.3 2.6 -6.5 2.6 -7.7 0 z" fill="none" stroke="#19cfe3" stroke-width="1.1"/>
<circle cx="225.75" cy="498.8" r="1" fill="#19cfe3"/>
<rect x="234" y="494.1" width="42.1" height="9.3" fill="#03e9fc"/>
<text x="255.05" y="501.22" font-size="7.6" fill="#10464d" text-anchor="middle" stroke="#10464d" stroke-width="0.28" textLength="34.2" lengthAdjust="spacingAndGlyphs">Envelopes</text>
<text x="309" y="501.42" font-size="7.6" fill="#19cfe3" text-anchor="middle" stroke="#19cfe3" stroke-width="0.38" textLength="16.6" lengthAdjust="spacingAndGlyphs">LFOs</text>
<text x="193" y="516.52" font-size="7.6" fill="#d2d2d2" stroke="#d2d2d2" stroke-width="0.3" textLength="15.2" lengthAdjust="spacingAndGlyphs">Amp</text>
<circle cx="214.6" cy="513.8" r="1.8" fill="#686868"/>
<text x="293.1" y="516.62" font-size="7.6" fill="#19cfe3" stroke="#19cfe3" stroke-width="0.36" textLength="17.9" lengthAdjust="spacingAndGlyphs">None</text>
<path d="M321.8 512.85 h4.2 l-2.1 2.7 z" fill="#19cfe3"/>
<rect x="193.2" y="524.6" width="3.4" height="3.4" fill="#242424" stroke="#e2a40d" stroke-width="0.85"/>
<rect x="208.1" y="524.6" width="3.4" height="3.4" fill="#242424" stroke="#e2a40d" stroke-width="0.85"/>
<rect x="287.8" y="557.1" width="3.4" height="3.4" fill="#242424" stroke="#e2a40d" stroke-width="0.85"/>
<path d="M195.1 559.6 V526.3 H281.6 Q282.3 526.3 282.4 527.3 C283.4 542 285.8 551.5 289.5 558.8" fill="none" stroke="#1ad3e7" stroke-width="1.25"/>
<circle cx="203" cy="526.3" r="1.45" fill="#3a2c2f" stroke="#c8757f" stroke-width="0.7"/>
<circle cx="195.3" cy="542.8" r="1.45" fill="#3a2c2f" stroke="#c8757f" stroke-width="0.7"/>
<circle cx="286" cy="550.5" r="1.45" fill="#3a2c2f" stroke="#c8757f" stroke-width="0.7"/>
<text x="335.2" y="516.52" font-size="7.6" fill="#d2d2d2" stroke="#d2d2d2" stroke-width="0.3" textLength="39" lengthAdjust="spacingAndGlyphs">Modulation</text>
<circle cx="380.2" cy="513.8" r="1.8" fill="#686868"/>
<text x="435.3" y="516.62" font-size="7.6" fill="#19cfe3" stroke="#19cfe3" stroke-width="0.36" textLength="17.9" lengthAdjust="spacingAndGlyphs">None</text>
<path d="M463.9 512.85 h4.2 l-2.1 2.7 z" fill="#19cfe3"/>
<rect x="335.5" y="524.6" width="3.4" height="3.4" fill="#242424" stroke="#e2a40d" stroke-width="0.85"/>
<rect x="335.5" y="557.3" width="3.4" height="3.4" fill="#242424" stroke="#e2a40d" stroke-width="0.85"/>
<rect x="350.3" y="557.3" width="3.4" height="3.4" fill="#242424" stroke="#e2a40d" stroke-width="0.85"/>
<rect x="430" y="557.3" width="3.4" height="3.4" fill="#242424" stroke="#e2a40d" stroke-width="0.85"/>
<path d="M337.3 559.1 V526.3 C339 543 344 552 352 559.1 H431.7" fill="none" stroke="#1ad3e7" stroke-width="1.25"/>
<circle cx="337.3" cy="542.8" r="1.45" fill="#3a2c2f" stroke="#c8757f" stroke-width="0.7"/>
<circle cx="345.3" cy="550.6" r="1.45" fill="#3a2c2f" stroke="#c8757f" stroke-width="0.7"/>
<circle cx="428.4" cy="559" r="1.45" fill="#3a2c2f" stroke="#c8757f" stroke-width="0.7"/>
<text x="193" y="574.42" font-size="7.6" fill="#bdbdbd" stroke="#bdbdbd" stroke-width="0.16">A</text>
<text x="194.2" y="584.12" font-size="7.6" fill="#19cfe3" stroke="#19cfe3" stroke-width="0.36" textLength="26" lengthAdjust="spacingAndGlyphs">0.00 ms</text>
<text x="225.9" y="574.42" font-size="7.6" fill="#bdbdbd" stroke="#bdbdbd" stroke-width="0.16">D</text>
<text x="227.1" y="584.12" font-size="7.6" fill="#19cfe3" stroke="#19cfe3" stroke-width="0.36" textLength="24" lengthAdjust="spacingAndGlyphs">600 ms</text>
<text x="258.2" y="574.42" font-size="7.6" fill="#bdbdbd" stroke="#bdbdbd" stroke-width="0.16">S</text>
<text x="259.4" y="584.12" font-size="7.6" fill="#19cfe3" stroke="#19cfe3" stroke-width="0.36" textLength="20.8" lengthAdjust="spacingAndGlyphs">0.0 dB</text>
<text x="291" y="574.42" font-size="7.6" fill="#bdbdbd" stroke="#bdbdbd" stroke-width="0.16">R</text>
<text x="292.2" y="584.12" font-size="7.6" fill="#19cfe3" stroke="#19cfe3" stroke-width="0.36" textLength="25.6" lengthAdjust="spacingAndGlyphs">50.0 ms</text>
<text x="193" y="597.42" font-size="7.6" fill="#bdbdbd" stroke="#bdbdbd" stroke-width="0.16" textLength="25" lengthAdjust="spacingAndGlyphs">A Slope</text>
<text x="194.2" y="606.82" font-size="7.6" fill="#d86b7a" stroke="#d86b7a" stroke-width="0.36" textLength="17.8" lengthAdjust="spacingAndGlyphs">0.0 %</text>
<text x="225.9" y="597.42" font-size="7.6" fill="#bdbdbd" stroke="#bdbdbd" stroke-width="0.16" textLength="25.2" lengthAdjust="spacingAndGlyphs">D Slope</text>
<text x="227.1" y="606.82" font-size="7.6" fill="#d86b7a" stroke="#d86b7a" stroke-width="0.36" textLength="16" lengthAdjust="spacingAndGlyphs">50 %</text>
<text x="291" y="597.42" font-size="7.6" fill="#bdbdbd" stroke="#bdbdbd" stroke-width="0.16" textLength="25.2" lengthAdjust="spacingAndGlyphs">R Slope</text>
<text x="292.2" y="606.82" font-size="7.6" fill="#d86b7a" stroke="#d86b7a" stroke-width="0.36" textLength="16" lengthAdjust="spacingAndGlyphs">50 %</text>
<text x="341.1" y="574.42" font-size="7.6" fill="#bdbdbd" stroke="#bdbdbd" stroke-width="0.16">A</text>
<text x="342.3" y="584.12" font-size="7.6" fill="#19cfe3" stroke="#19cfe3" stroke-width="0.36" textLength="26" lengthAdjust="spacingAndGlyphs">0.00 ms</text>
<text x="373.9" y="574.42" font-size="7.6" fill="#bdbdbd" stroke="#bdbdbd" stroke-width="0.16">D</text>
<text x="375.1" y="584.12" font-size="7.6" fill="#19cfe3" stroke="#19cfe3" stroke-width="0.36" textLength="24" lengthAdjust="spacingAndGlyphs">600 ms</text>
<text x="406.3" y="574.42" font-size="7.6" fill="#bdbdbd" stroke="#bdbdbd" stroke-width="0.16">S</text>
<text x="407.5" y="584.12" font-size="7.6" fill="#19cfe3" stroke="#19cfe3" stroke-width="0.36" textLength="18" lengthAdjust="spacingAndGlyphs">0.0 %</text>
<text x="439" y="574.42" font-size="7.6" fill="#bdbdbd" stroke="#bdbdbd" stroke-width="0.16">R</text>
<text x="440.2" y="584.12" font-size="7.6" fill="#19cfe3" stroke="#19cfe3" stroke-width="0.36" textLength="25.6" lengthAdjust="spacingAndGlyphs">50.0 ms</text>
<text x="341.1" y="597.42" font-size="7.6" fill="#bdbdbd" stroke="#bdbdbd" stroke-width="0.16" textLength="19.4" lengthAdjust="spacingAndGlyphs">Initial</text>
<text x="342.3" y="606.82" font-size="7.6" fill="#19cfe3" stroke="#19cfe3" stroke-width="0.36" textLength="18" lengthAdjust="spacingAndGlyphs">0.0 %</text>
<text x="373.9" y="597.42" font-size="7.6" fill="#bdbdbd" stroke="#bdbdbd" stroke-width="0.16" textLength="16.2" lengthAdjust="spacingAndGlyphs">Peak</text>
<text x="375.1" y="606.82" font-size="7.6" fill="#19cfe3" stroke="#19cfe3" stroke-width="0.36" textLength="20" lengthAdjust="spacingAndGlyphs">100 %</text>
<text x="439" y="597.42" font-size="7.6" fill="#bdbdbd" stroke="#bdbdbd" stroke-width="0.16" textLength="16.2" lengthAdjust="spacingAndGlyphs">Final</text>
<text x="440.2" y="606.82" font-size="7.6" fill="#19cfe3" stroke="#19cfe3" stroke-width="0.36" textLength="18" lengthAdjust="spacingAndGlyphs">0.0 %</text>
<rect x="334.5" y="593.2" width="3.2" height="3.2" fill="none" stroke="#b5b5b5" stroke-width="0.7"/>
<rect x="475" y="492.1" width="80.4" height="58.5" fill="#a8a8a8" rx="1.5"/>
<rect x="477.6" y="495.6" width="8.3" height="8.2" fill="#03e9fc" stroke="#4a7a80" stroke-width="0.6"/>
<text x="481.9" y="502.28" font-size="7.2" fill="#203a3e" text-anchor="middle" stroke="#203a3e" stroke-width="0.28">A</text>
<rect x="489.5" y="495.5" width="63.5" height="8.5" fill="#e0e0e0" rx="1.1" stroke="#686868" stroke-width="0.9"/>
<text x="491" y="502.12" font-size="7.6" fill="#1f1f1f" stroke="#1f1f1f" stroke-width="0.14" textLength="31.8" lengthAdjust="spacingAndGlyphs">SVF 12dB</text>
<path d="M546.8 498.1 h4.4 l-2.2 3.4 z" fill="#1a1a1a"/>
<path d="M489.51 533.93 A12.4 12.4 0 1 1 504.09 533.93" fill="none" stroke="#03e9fc" stroke-width="1.8" stroke-linecap="butt"/>
<line x1="498.25" y1="526.06" x2="504.07" y2="534.68" stroke="#222" stroke-width="1.6"/>
<text x="496.8" y="543.72" font-size="7.6" fill="#2a2a2a" text-anchor="middle" stroke="#2a2a2a" stroke-width="0.28" textLength="28.6" lengthAdjust="spacingAndGlyphs">20.5 kHz</text>
<text x="534.3" y="513.85" font-size="7.4" fill="#2a2a2a" text-anchor="middle" stroke="#2a2a2a" stroke-width="0.28">Q</text>
<rect x="520.3" y="516.5" width="28.1" height="8.8" fill="#e0e0e0" rx="1.1" stroke="#686868" stroke-width="0.9"/>
<text x="533.8" y="523.32" font-size="7.6" fill="#303030" text-anchor="middle" stroke="#303030" stroke-width="0.15" textLength="10.6" lengthAdjust="spacingAndGlyphs">0.0</text>
<text x="534.3" y="535.42" font-size="7.6" fill="#2a2a2a" text-anchor="middle" stroke="#2a2a2a" stroke-width="0.28" textLength="26.4" lengthAdjust="spacingAndGlyphs">L-B-H-N</text>
<rect x="520.3" y="537.3" width="28.1" height="8.7" fill="#e0e0e0" rx="1.1" stroke="#686868" stroke-width="0.9"/>
<text x="533.8" y="544.12" font-size="7.6" fill="#303030" text-anchor="middle" stroke="#303030" stroke-width="0.15" textLength="10.6" lengthAdjust="spacingAndGlyphs">0.0</text>
<rect x="475" y="552.7" width="80.4" height="59.2" fill="#a8a8a8" rx="1.5"/>
<rect x="477.6" y="555.9" width="8.3" height="8.2" fill="#fdb90c" stroke="#8a6a20" stroke-width="0.6"/>
<text x="481.9" y="562.58" font-size="7.2" fill="#4e3803" text-anchor="middle" stroke="#4e3803" stroke-width="0.28">B</text>
<rect x="489.5" y="555.8" width="63.5" height="8.5" fill="#e0e0e0" rx="1.1" stroke="#686868" stroke-width="0.9"/>
<text x="491" y="562.42" font-size="7.6" fill="#1f1f1f" stroke="#1f1f1f" stroke-width="0.14" textLength="31.8" lengthAdjust="spacingAndGlyphs">SVF 12dB</text>
<path d="M546.8 558.4 h4.4 l-2.2 3.4 z" fill="#1a1a1a"/>
<path d="M489.51 594.73 A12.4 12.4 0 1 1 504.09 594.73" fill="none" stroke="#fdb90c" stroke-width="1.8" stroke-linecap="butt"/>
<line x1="498.25" y1="586.86" x2="504.07" y2="595.48" stroke="#222" stroke-width="1.6"/>
<text x="496.8" y="604.52" font-size="7.6" fill="#2a2a2a" text-anchor="middle" stroke="#2a2a2a" stroke-width="0.28" textLength="28.6" lengthAdjust="spacingAndGlyphs">20.5 kHz</text>
<text x="534.3" y="574.65" font-size="7.4" fill="#2a2a2a" text-anchor="middle" stroke="#2a2a2a" stroke-width="0.28">Q</text>
<rect x="520.3" y="577.3" width="28.1" height="8.8" fill="#e0e0e0" rx="1.1" stroke="#686868" stroke-width="0.9"/>
<text x="533.8" y="584.12" font-size="7.6" fill="#303030" text-anchor="middle" stroke="#303030" stroke-width="0.15" textLength="10.6" lengthAdjust="spacingAndGlyphs">0.0</text>
<text x="534.3" y="596.22" font-size="7.6" fill="#2a2a2a" text-anchor="middle" stroke="#2a2a2a" stroke-width="0.28" textLength="26.4" lengthAdjust="spacingAndGlyphs">L-B-H-N</text>
<rect x="520.3" y="598.1" width="28.1" height="8.7" fill="#e0e0e0" rx="1.1" stroke="#686868" stroke-width="0.9"/>
<text x="533.8" y="604.92" font-size="7.6" fill="#303030" text-anchor="middle" stroke="#303030" stroke-width="0.15" textLength="10.6" lengthAdjust="spacingAndGlyphs">0.0</text>
<rect x="557.8" y="492.1" width="58.2" height="58.5" fill="#a8a8a8" rx="1.5"/>
<rect x="560.6" y="495.6" width="26.1" height="8.2" fill="#e0e0e0" rx="1.1" stroke="#686868" stroke-width="0.9"/>
<text x="573.6" y="502.52" font-size="7.6" fill="#2a2a2a" text-anchor="middle" stroke="#2a2a2a" stroke-width="0.28">C</text>
<text x="573.4" y="516.22" font-size="7.6" fill="#2a2a2a" text-anchor="middle" stroke="#2a2a2a" stroke-width="0.28" textLength="16.2" lengthAdjust="spacingAndGlyphs">Tone</text>
<path d="M568.3 538.68 A8.5 8.5 0 1 1 578.3 538.68" fill="none" stroke="#262626" stroke-width="1.9" stroke-linecap="butt"/>
<line x1="573.3" y1="521.6" x2="573.3" y2="532.6" stroke="#a8a8a8" stroke-width="3.6"/>
<line x1="573.3" y1="521.5" x2="573.3" y2="531.8" stroke="#262626" stroke-width="1.5"/>
<path d="M570.95 518.4 h4.8 l-2.4 2.8 z" fill="#222"/>
<text x="573" y="546.62" font-size="7.6" fill="#2a2a2a" text-anchor="middle" stroke="#2a2a2a" stroke-width="0.28" textLength="14.6" lengthAdjust="spacingAndGlyphs">0.00</text>
<rect x="598" y="495.7" width="2.9" height="42.3" fill="#2b2b2b"/>
<rect x="601.4" y="495.7" width="2.9" height="42.3" fill="#2b2b2b"/>
<path d="M605.5 511.6 L612 508.5 V514.7 z" fill="#e4e4e4" stroke="#6a6a6a" stroke-width="0.7"/>
<text x="601.6" y="546.62" font-size="7.6" fill="#2a2a2a" text-anchor="middle" stroke="#2a2a2a" stroke-width="0.28" textLength="23.6" lengthAdjust="spacingAndGlyphs">-3.0 dB</text>
<rect x="557.8" y="552.7" width="58.2" height="59.2" fill="#a8a8a8" rx="1.5"/>
<rect x="560.6" y="555.9" width="26.1" height="8.2" fill="#e0e0e0" rx="1.1" stroke="#686868" stroke-width="0.9"/>
<text x="573.6" y="562.82" font-size="7.6" fill="#2a2a2a" text-anchor="middle" stroke="#2a2a2a" stroke-width="0.28">C</text>
<text x="573.4" y="577.52" font-size="7.6" fill="#2a2a2a" text-anchor="middle" stroke="#2a2a2a" stroke-width="0.28" textLength="16.2" lengthAdjust="spacingAndGlyphs">Tone</text>
<path d="M568.3 599.48 A8.5 8.5 0 1 1 578.3 599.48" fill="none" stroke="#262626" stroke-width="1.9" stroke-linecap="butt"/>
<line x1="573.3" y1="582.4" x2="573.3" y2="593.4" stroke="#a8a8a8" stroke-width="3.6"/>
<line x1="573.3" y1="582.3" x2="573.3" y2="592.6" stroke="#262626" stroke-width="1.5"/>
<path d="M570.95 579.7 h4.8 l-2.4 2.8 z" fill="#222"/>
<text x="573" y="607.42" font-size="7.6" fill="#2a2a2a" text-anchor="middle" stroke="#2a2a2a" stroke-width="0.28" textLength="14.6" lengthAdjust="spacingAndGlyphs">0.00</text>
<rect x="598" y="556" width="2.9" height="42.8" fill="#2b2b2b"/>
<rect x="601.4" y="556" width="2.9" height="42.8" fill="#2b2b2b"/>
<path d="M605.5 572.4 L612 569.3 V575.5 z" fill="#e4e4e4" stroke="#6a6a6a" stroke-width="0.7"/>
<text x="601.6" y="607.42" font-size="7.6" fill="#2a2a2a" text-anchor="middle" stroke="#2a2a2a" stroke-width="0.28" textLength="23.6" lengthAdjust="spacingAndGlyphs">-3.0 dB</text>
<rect x="618.3" y="492.1" width="39.5" height="119.8" fill="#a8a8a8" rx="1.5"/>
<rect x="621.2" y="495.6" width="34.3" height="8.2" fill="#03e9fc" rx="0.6" stroke="#5a5a5a" stroke-width="0.7"/>
<text x="638.4" y="502.42" font-size="7.6" fill="#123c42" text-anchor="middle" stroke="#123c42" stroke-width="0.28" textLength="14.4" lengthAdjust="spacingAndGlyphs">Poly</text>
<rect x="621.2" y="506.4" width="34.3" height="8.9" fill="#e0e0e0" rx="1.1" stroke="#686868" stroke-width="0.9"/>
<path d="M649.5 509.1 h4.2 l-2.1 3.2 z" fill="#1a1a1a"/>
<text x="622.8" y="513.42" font-size="7.6" fill="#1f1f1f" stroke="#1f1f1f" stroke-width="0.28">8</text>
<text x="621.2" y="525.22" font-size="7.6" fill="#2a2a2a" stroke="#2a2a2a" stroke-width="0.28" textLength="24.2" lengthAdjust="spacingAndGlyphs">Spread</text>
<rect x="621.2" y="527.4" width="34.3" height="8.4" fill="#e0e0e0" rx="1.1" stroke="#686868" stroke-width="0.9"/>
<text x="638.6" y="534.17" font-size="7.6" fill="#1f1f1f" text-anchor="middle" stroke="#1f1f1f" stroke-width="0.28" textLength="18" lengthAdjust="spacingAndGlyphs">0.0 %</text>
<text x="621.2" y="545.52" font-size="7.6" fill="#2a2a2a" stroke="#2a2a2a" stroke-width="0.28" textLength="19.4" lengthAdjust="spacingAndGlyphs">Stack</text>
<rect x="621.2" y="547.8" width="34.3" height="8.8" fill="#e0e0e0" rx="1.1" stroke="#686868" stroke-width="0.9"/>
<path d="M649.5 550.45 h4.2 l-2.1 3.2 z" fill="#1a1a1a"/>
<text x="622.8" y="554.77" font-size="7.6" fill="#1f1f1f" stroke="#1f1f1f" stroke-width="0.28" textLength="10.6" lengthAdjust="spacingAndGlyphs">Off</text>
<rect x="620.6" y="559.7" width="35.4" height="0.7" fill="#9a9a9a"/>
<text x="621.2" y="569.32" font-size="7.6" fill="#2a2a2a" stroke="#2a2a2a" stroke-width="0.28" textLength="17.6" lengthAdjust="spacingAndGlyphs">Drive</text>
<rect x="621.2" y="571.9" width="34.3" height="7.9" fill="#e0e0e0" rx="1.1" stroke="#686868" stroke-width="0.9"/>
<text x="638.6" y="578.42" font-size="7.6" fill="#1f1f1f" text-anchor="middle" stroke="#1f1f1f" stroke-width="0.28" textLength="18" lengthAdjust="spacingAndGlyphs">0.0 %</text>
<text x="621.9" y="590.12" font-size="7.6" fill="#2a2a2a" stroke="#2a2a2a" stroke-width="0.28" textLength="25" lengthAdjust="spacingAndGlyphs">Volume</text>
<path d="M622.54 602.79 A6.1 6.1 0 1 1 634.3 600.5" fill="none" stroke="#262626" stroke-width="1.6" stroke-linecap="butt"/>
<path d="M628.2 606.6 A6.1 6.1 0 0 1 622.54 602.79" fill="none" stroke="#03e9fc" stroke-width="1.9" stroke-linecap="butt"/>
<line x1="628.4" y1="600.3" x2="621.83" y2="602.57" stroke="#262626" stroke-width="1.5"/>
<text x="631.1" y="608.82" font-size="7.6" fill="#2a2a2a" stroke="#2a2a2a" stroke-width="0.28" textLength="23.8" lengthAdjust="spacingAndGlyphs">-6.0 dB</text>
</g>
<g id="status-bar">
<circle cx="13" cy="626.8" r="5" fill="#a9a9a9"/>
<rect x="12.4" y="625.8" width="1.2" height="4" fill="#828282"/>
<circle cx="13" cy="624" r="0.8" fill="#828282"/>
<rect x="30" y="620" width="670.3" height="13.6" fill="#a6a6a6" rx="2"/>
<rect x="706.8" y="620" width="157.2" height="13.6" fill="#a6a6a6" rx="2"/>
<line x1="720.3" y1="620" x2="720.3" y2="633.6" stroke="#7a7a7a" stroke-width="0.6"/>
<path d="M711.6 624.2 L716 626.8 L711.6 629.4 z" fill="#161616"/>
<rect x="869.8" y="620" width="13.9" height="13.6" fill="#fdb90c"/>
<path d="M874.2 629 L876.8 624.6 L879.4 629 z" fill="#161616"/>
<rect x="883.7" y="620" width="34.1" height="13.6" fill="#a9a9a9"/>
<text x="888.5" y="629.02" font-size="7.6" fill="#1c1c1c" stroke="#1c1c1c" stroke-width="0.28" textLength="23.2" lengthAdjust="spacingAndGlyphs">1-Meld</text>
<rect x="918.4" y="619.3" width="65.5" height="15.2" fill="#c2c2c2" rx="2.6" stroke="#454545" stroke-width="1.2"/>
<rect x="919.1" y="620.2" width="6.9" height="13.4" fill="#262626"/>
<rect x="919.4" y="620.8" width="6.4" height="1.8" fill="#17b9cb"/>
<rect x="919.4" y="627.2" width="6.4" height="1.5" fill="#e2a40d"/>
<rect x="921" y="624.2" width="3.2" height="1" fill="#167f8b"/>
<rect x="921" y="630.4" width="3.2" height="1" fill="#8a6a10"/>
<rect x="919.8" y="632.2" width="1.2" height="0.7" fill="#8a6a10"/>
<rect x="922" y="632.2" width="1" height="0.7" fill="#8a6a10"/>
<rect x="924" y="632.2" width="1.2" height="0.7" fill="#8a6a10"/>
<rect x="926" y="620.2" width="10.2" height="13.4" fill="#c8c8c8"/>
<circle cx="928.8" cy="624.4" r="1.6" fill="none" stroke="#a2a2a2" stroke-width="0.5"/>
<circle cx="933" cy="624.4" r="1.6" fill="none" stroke="#a2a2a2" stroke-width="0.5"/>
<circle cx="928.8" cy="630.4" r="1.6" fill="none" stroke="#a2a2a2" stroke-width="0.5"/>
<circle cx="933" cy="630.4" r="1.6" fill="none" stroke="#a2a2a2" stroke-width="0.5"/>
<rect x="936.2" y="621.4" width="28.1" height="11.9" fill="#262626"/>
<rect x="939.7" y="620.2" width="5.2" height="1.4" fill="#262626"/>
<rect x="940.6" y="620.7" width="3.6" height="1.2" fill="#17b9cb"/>
<rect x="946" y="620.3" width="18.3" height="1" fill="#b4b4b4"/>
<rect x="947.3" y="622.2" width="1.3" height="0.8" fill="#167f8b"/>
<rect x="955.6" y="622.2" width="1.4" height="0.8" fill="#167f8b"/>
<rect x="960" y="622.2" width="1.2" height="0.8" fill="#167f8b"/>
<path d="M937 629.4 V624.8 H944.4 C944.8 627.6 945.2 628.8 945.8 629.4 M950.6 629.4 V624.8 C951 627.6 951.8 628.9 952.8 629.4 H961.4" fill="none" stroke="#137884" stroke-width="0.6"/>
<rect x="936.8" y="630.1" width="1.8" height="0.9" fill="#1597a6"/>
<rect x="940.1" y="630.1" width="1.4" height="0.9" fill="#1597a6"/>
<rect x="943.3" y="630.1" width="1.9" height="0.9" fill="#1597a6"/>
<rect x="946.8" y="630.1" width="1.9" height="0.9" fill="#1597a6"/>
<rect x="951.5" y="630.1" width="1.9" height="0.9" fill="#1597a6"/>
<rect x="955" y="630.1" width="1.5" height="0.9" fill="#1597a6"/>
<rect x="958.5" y="630.1" width="1.5" height="0.9" fill="#1597a6"/>
<rect x="961.6" y="630.1" width="2" height="0.9" fill="#1597a6"/>
<rect x="936.8" y="631.9" width="1.4" height="0.8" fill="#a4525d"/>
<rect x="940.1" y="631.9" width="1.2" height="0.8" fill="#a4525d"/>
<rect x="946.8" y="631.9" width="1.5" height="0.8" fill="#a4525d"/>
<rect x="951.5" y="631.9" width="1.5" height="0.8" fill="#1597a6"/>
<rect x="955" y="631.9" width="1.5" height="0.8" fill="#1597a6"/>
<rect x="962" y="631.9" width="1.6" height="0.8" fill="#1597a6"/>
<rect x="964.3" y="620.2" width="18.9" height="13.4" fill="#c4c4c4"/>
<rect x="965.2" y="621.4" width="1" height="0.9" fill="#17b9cb"/>
<rect x="965.2" y="627.4" width="1" height="0.9" fill="#e2a40d"/>
<rect x="966.8" y="621.3" width="6.8" height="1.1" fill="#e6e6e6"/>
<rect x="966.8" y="627.3" width="6.8" height="1.1" fill="#e6e6e6"/>
<circle cx="967" cy="624.6" r="1.3" fill="none" stroke="#17b9cb" stroke-width="0.6"/>
<circle cx="967" cy="630.8" r="1.3" fill="none" stroke="#e2a40d" stroke-width="0.6"/>
<rect x="970.4" y="623.4" width="3.2" height="1" fill="#e6e6e6"/>
<rect x="970.4" y="625.4" width="3.2" height="1" fill="#e6e6e6"/>
<rect x="970.4" y="629.4" width="3.2" height="1" fill="#e6e6e6"/>
<rect x="970.4" y="631.4" width="3.2" height="1" fill="#e6e6e6"/>
<rect x="975.2" y="621.4" width="2.4" height="0.8" fill="#e6e6e6"/>
<rect x="975.2" y="627.4" width="2.4" height="0.8" fill="#e6e6e6"/>
<circle cx="976.2" cy="624.6" r="0.9" fill="none" stroke="#555" stroke-width="0.4"/>
<circle cx="976.2" cy="630.6" r="0.9" fill="none" stroke="#555" stroke-width="0.4"/>
<rect x="977.9" y="621.2" width="0.8" height="5" fill="#333"/>
<rect x="977.9" y="627.4" width="0.8" height="5" fill="#333"/>
<rect x="980" y="620.9" width="2.8" height="1.7" fill="#17b9cb"/>
<rect x="980" y="623.4" width="2.8" height="0.9" fill="#e8e8e8"/>
<rect x="980" y="625.2" width="2.8" height="0.9" fill="#e8e8e8"/>
<rect x="980" y="627" width="2.8" height="0.9" fill="#e8e8e8"/>
<rect x="980" y="628.8" width="2.8" height="0.9" fill="#e8e8e8"/>
<circle cx="980.8" cy="631.6" r="0.8" fill="none" stroke="#17b9cb" stroke-width="0.5"/>
<rect x="996.1" y="624.8" width="1.5" height="6.5" fill="#e6a913"/>
<rect x="999" y="622" width="1.5" height="9.3" fill="#e6a913"/>
<rect x="1002" y="625.4" width="1.5" height="5.9" fill="#e6a913"/>
<rect x="1005" y="623.4" width="1.5" height="7.9" fill="#e6a913"/>
<path d="M1011.05 625.6 h3.9 l-1.95 2.6 z" fill="#b0b0b0"/>
</g>
<g id="engine-menu">
<rect x="22.75" y="238.75" width="82.65" height="254.75" fill="#242424" stroke="#15a8ba" stroke-width="1.1"/>
<rect x="22.2" y="238.2" width="83.75" height="9.7" fill="#03e9fc"/>
<text x="24.6" y="245.95" font-size="7.4" fill="#123e45" stroke="#123e45" stroke-width="0.36" textLength="44.6" lengthAdjust="spacingAndGlyphs">Basic Shapes</text>
<text x="24.6" y="257.13" font-size="7.4" fill="#18c5d8" stroke="#18c5d8" stroke-width="0.36" textLength="61.3" lengthAdjust="spacingAndGlyphs">Dual Basic Shapes</text>
<text x="89.5" y="256.99" font-size="7" fill="#18c5d8" stroke="#18c5d8" stroke-width="0.3" style='font-family:"Liberation Sans", "DejaVu Sans", sans-serif' textLength="12.6" lengthAdjust="spacingAndGlyphs">(♭♯)</text>
<text x="24.6" y="267.76" font-size="7.4" fill="#18c5d8" stroke="#18c5d8" stroke-width="0.36" textLength="45" lengthAdjust="spacingAndGlyphs">Noisy Shapes</text>
<text x="24.6" y="278.39" font-size="7.4" fill="#18c5d8" stroke="#18c5d8" stroke-width="0.36" textLength="42.2" lengthAdjust="spacingAndGlyphs">Square Sync</text>
<text x="24.6" y="289.02" font-size="7.4" fill="#18c5d8" stroke="#18c5d8" stroke-width="0.36" textLength="37.6" lengthAdjust="spacingAndGlyphs">Square 5th</text>
<text x="24.6" y="299.65" font-size="7.4" fill="#18c5d8" stroke="#18c5d8" stroke-width="0.36" textLength="12.4" lengthAdjust="spacingAndGlyphs">Sub</text>
<text x="24.6" y="310.28" font-size="7.4" fill="#18c5d8" stroke="#18c5d8" stroke-width="0.36" textLength="39.2" lengthAdjust="spacingAndGlyphs">Swarm Sine</text>
<text x="67.4" y="310.14" font-size="7" fill="#18c5d8" stroke="#18c5d8" stroke-width="0.3" style='font-family:"Liberation Sans", "DejaVu Sans", sans-serif' textLength="12.6" lengthAdjust="spacingAndGlyphs">(♭♯)</text>
<text x="24.6" y="320.91" font-size="7.4" fill="#18c5d8" stroke="#18c5d8" stroke-width="0.36" textLength="52.6" lengthAdjust="spacingAndGlyphs">Swarm Triangle</text>
<text x="80.8" y="320.77" font-size="7" fill="#18c5d8" stroke="#18c5d8" stroke-width="0.3" style='font-family:"Liberation Sans", "DejaVu Sans", sans-serif' textLength="12.6" lengthAdjust="spacingAndGlyphs">(♭♯)</text>
<text x="24.6" y="331.54" font-size="7.4" fill="#18c5d8" stroke="#18c5d8" stroke-width="0.36" textLength="38.2" lengthAdjust="spacingAndGlyphs">Swarm Saw</text>
<text x="66.4" y="331.4" font-size="7" fill="#18c5d8" stroke="#18c5d8" stroke-width="0.3" style='font-family:"Liberation Sans", "DejaVu Sans", sans-serif' textLength="12.6" lengthAdjust="spacingAndGlyphs">(♭♯)</text>
<text x="24.6" y="342.17" font-size="7.4" fill="#18c5d8" stroke="#18c5d8" stroke-width="0.36" textLength="48.8" lengthAdjust="spacingAndGlyphs">Swarm Square</text>
<text x="77" y="342.03" font-size="7" fill="#18c5d8" stroke="#18c5d8" stroke-width="0.3" style='font-family:"Liberation Sans", "DejaVu Sans", sans-serif' textLength="12.6" lengthAdjust="spacingAndGlyphs">(♭♯)</text>
<text x="24.6" y="352.8" font-size="7.4" fill="#18c5d8" stroke="#18c5d8" stroke-width="0.36" textLength="45" lengthAdjust="spacingAndGlyphs">Harmonic Fm</text>
<text x="24.6" y="363.43" font-size="7.4" fill="#18c5d8" stroke="#18c5d8" stroke-width="0.36" textLength="25.6" lengthAdjust="spacingAndGlyphs">Fold Fm</text>
<text x="24.6" y="374.06" font-size="7.4" fill="#18c5d8" stroke="#18c5d8" stroke-width="0.36" textLength="27.2" lengthAdjust="spacingAndGlyphs">Squelch</text>
<text x="24.6" y="384.69" font-size="7.4" fill="#18c5d8" stroke="#18c5d8" stroke-width="0.36" textLength="34.6" lengthAdjust="spacingAndGlyphs">Simple Fm</text>
<text x="24.6" y="395.32" font-size="7.4" fill="#18c5d8" stroke="#18c5d8" stroke-width="0.36" textLength="15.4" lengthAdjust="spacingAndGlyphs">Chip</text>
<text x="43.6" y="395.18" font-size="7" fill="#18c5d8" stroke="#18c5d8" stroke-width="0.3" style='font-family:"Liberation Sans", "DejaVu Sans", sans-serif' textLength="12.6" lengthAdjust="spacingAndGlyphs">(♭♯)</text>
<text x="24.6" y="405.95" font-size="7.4" fill="#18c5d8" stroke="#18c5d8" stroke-width="0.36" textLength="42.4" lengthAdjust="spacingAndGlyphs">Shepard&#x27;s Pi</text>
<text x="24.6" y="416.58" font-size="7.4" fill="#18c5d8" stroke="#18c5d8" stroke-width="0.36" textLength="15" lengthAdjust="spacingAndGlyphs">Tarp</text>
<text x="24.6" y="427.21" font-size="7.4" fill="#18c5d8" stroke="#18c5d8" stroke-width="0.36" textLength="33.8" lengthAdjust="spacingAndGlyphs">Extratone</text>
<text x="24.6" y="437.84" font-size="7.4" fill="#18c5d8" stroke="#18c5d8" stroke-width="0.36" textLength="37.4" lengthAdjust="spacingAndGlyphs">Noise Loop</text>
<text x="24.6" y="448.47" font-size="7.4" fill="#18c5d8" stroke="#18c5d8" stroke-width="0.36" textLength="47.6" lengthAdjust="spacingAndGlyphs">Filtered Noise</text>
<text x="24.6" y="459.1" font-size="7.4" fill="#18c5d8" stroke="#18c5d8" stroke-width="0.36" textLength="33.8" lengthAdjust="spacingAndGlyphs">Bitgrunge</text>
<text x="24.6" y="469.73" font-size="7.4" fill="#18c5d8" stroke="#18c5d8" stroke-width="0.36" textLength="25.6" lengthAdjust="spacingAndGlyphs">Crackle</text>
<text x="24.6" y="480.36" font-size="7.4" fill="#18c5d8" stroke="#18c5d8" stroke-width="0.36" textLength="14.6" lengthAdjust="spacingAndGlyphs">Rain</text>
<text x="24.6" y="490.99" font-size="7.4" fill="#18c5d8" stroke="#18c5d8" stroke-width="0.36" textLength="23.6" lengthAdjust="spacingAndGlyphs">Bubble</text>
</g>
<g id="cursor">
<path d="M143.3 426.1 V436.8 L145.8 434.6 L147.5 438.5 L149.2 437.7 L147.6 433.9 L151 433.6 z" fill="#111" stroke="#f4f4f4" stroke-width="0.8" stroke-linejoin="round"/>
</g>
</svg>
</body>
</html>
